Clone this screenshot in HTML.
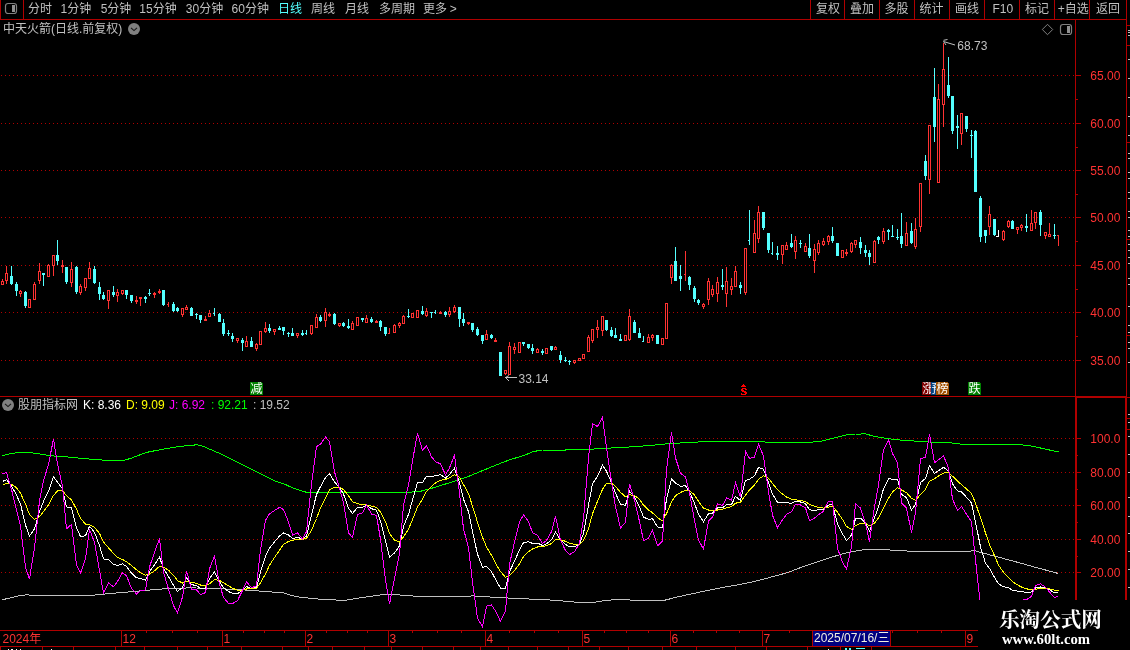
<!DOCTYPE html>
<html><head><meta charset="utf-8"><title>中天火箭 日线</title>
<style>
html,body{margin:0;padding:0;background:#000}
body{width:1130px;height:650px;overflow:hidden;position:relative;font-family:"Liberation Sans","Noto Sans CJK SC",sans-serif}
svg{position:absolute;left:0;top:0;display:block;will-change:transform}
text{font-family:"Liberation Sans","Noto Sans CJK SC",sans-serif}
</style></head><body>
<svg width="1130" height="650" viewBox="0 0 1130 650">
<g shape-rendering="crispEdges">
<rect x="0" y="19" width="1127" height="1" fill="#b00000"/>
<rect x="0" y="0" width="1" height="20" fill="#b00000"/>
<rect x="23" y="0" width="1" height="20" fill="#b00000"/>
<rect x="810" y="0" width="1" height="20" fill="#b00000"/>
<rect x="844" y="0" width="1" height="20" fill="#b00000"/>
<rect x="879" y="0" width="1" height="20" fill="#b00000"/>
<rect x="914" y="0" width="1" height="20" fill="#b00000"/>
<rect x="949" y="0" width="1" height="20" fill="#b00000"/>
<rect x="984" y="0" width="1" height="20" fill="#b00000"/>
<rect x="1019" y="0" width="1" height="20" fill="#b00000"/>
<rect x="1054" y="0" width="1" height="20" fill="#b00000"/>
<rect x="1089" y="0" width="1" height="20" fill="#b00000"/>
<rect x="1126" y="0" width="1" height="650" fill="#b00000"/>
<rect x="1075" y="20" width="1" height="376" fill="#b00000"/>
<rect x="1075" y="396" width="2" height="234" fill="#b00000"/>
<rect x="1125" y="396" width="2" height="234" fill="#b00000"/>
<rect x="0" y="396" width="1076" height="1" fill="#b00000"/>
<rect x="1075" y="396" width="52" height="2" fill="#b00000"/>
<rect x="0" y="630" width="1127" height="1" fill="#b00000"/>
<rect x="0" y="646" width="1127" height="1" fill="#b00000"/>
<path d="M1 75h1v1h-1zM5 75h1v1h-1zM9 75h1v1h-1zM13 75h1v1h-1zM17 75h1v1h-1zM21 75h1v1h-1zM25 75h1v1h-1zM29 75h1v1h-1zM33 75h1v1h-1zM37 75h1v1h-1zM41 75h1v1h-1zM45 75h1v1h-1zM49 75h1v1h-1zM53 75h1v1h-1zM57 75h1v1h-1zM61 75h1v1h-1zM65 75h1v1h-1zM69 75h1v1h-1zM73 75h1v1h-1zM77 75h1v1h-1zM81 75h1v1h-1zM85 75h1v1h-1zM89 75h1v1h-1zM93 75h1v1h-1zM97 75h1v1h-1zM101 75h1v1h-1zM105 75h1v1h-1zM109 75h1v1h-1zM113 75h1v1h-1zM117 75h1v1h-1zM121 75h1v1h-1zM125 75h1v1h-1zM129 75h1v1h-1zM133 75h1v1h-1zM137 75h1v1h-1zM141 75h1v1h-1zM145 75h1v1h-1zM149 75h1v1h-1zM153 75h1v1h-1zM157 75h1v1h-1zM161 75h1v1h-1zM165 75h1v1h-1zM169 75h1v1h-1zM173 75h1v1h-1zM177 75h1v1h-1zM181 75h1v1h-1zM185 75h1v1h-1zM189 75h1v1h-1zM193 75h1v1h-1zM197 75h1v1h-1zM201 75h1v1h-1zM205 75h1v1h-1zM209 75h1v1h-1zM213 75h1v1h-1zM217 75h1v1h-1zM221 75h1v1h-1zM225 75h1v1h-1zM229 75h1v1h-1zM233 75h1v1h-1zM237 75h1v1h-1zM241 75h1v1h-1zM245 75h1v1h-1zM249 75h1v1h-1zM253 75h1v1h-1zM257 75h1v1h-1zM261 75h1v1h-1zM265 75h1v1h-1zM269 75h1v1h-1zM273 75h1v1h-1zM277 75h1v1h-1zM281 75h1v1h-1zM285 75h1v1h-1zM289 75h1v1h-1zM293 75h1v1h-1zM297 75h1v1h-1zM301 75h1v1h-1zM305 75h1v1h-1zM309 75h1v1h-1zM313 75h1v1h-1zM317 75h1v1h-1zM321 75h1v1h-1zM325 75h1v1h-1zM329 75h1v1h-1zM333 75h1v1h-1zM337 75h1v1h-1zM341 75h1v1h-1zM345 75h1v1h-1zM349 75h1v1h-1zM353 75h1v1h-1zM357 75h1v1h-1zM361 75h1v1h-1zM365 75h1v1h-1zM369 75h1v1h-1zM373 75h1v1h-1zM377 75h1v1h-1zM381 75h1v1h-1zM385 75h1v1h-1zM389 75h1v1h-1zM393 75h1v1h-1zM397 75h1v1h-1zM401 75h1v1h-1zM405 75h1v1h-1zM409 75h1v1h-1zM413 75h1v1h-1zM417 75h1v1h-1zM421 75h1v1h-1zM425 75h1v1h-1zM429 75h1v1h-1zM433 75h1v1h-1zM437 75h1v1h-1zM441 75h1v1h-1zM445 75h1v1h-1zM449 75h1v1h-1zM453 75h1v1h-1zM457 75h1v1h-1zM461 75h1v1h-1zM465 75h1v1h-1zM469 75h1v1h-1zM473 75h1v1h-1zM477 75h1v1h-1zM481 75h1v1h-1zM485 75h1v1h-1zM489 75h1v1h-1zM493 75h1v1h-1zM497 75h1v1h-1zM501 75h1v1h-1zM505 75h1v1h-1zM509 75h1v1h-1zM513 75h1v1h-1zM517 75h1v1h-1zM521 75h1v1h-1zM525 75h1v1h-1zM529 75h1v1h-1zM533 75h1v1h-1zM537 75h1v1h-1zM541 75h1v1h-1zM545 75h1v1h-1zM549 75h1v1h-1zM553 75h1v1h-1zM557 75h1v1h-1zM561 75h1v1h-1zM565 75h1v1h-1zM569 75h1v1h-1zM573 75h1v1h-1zM577 75h1v1h-1zM581 75h1v1h-1zM585 75h1v1h-1zM589 75h1v1h-1zM593 75h1v1h-1zM597 75h1v1h-1zM601 75h1v1h-1zM605 75h1v1h-1zM609 75h1v1h-1zM613 75h1v1h-1zM617 75h1v1h-1zM621 75h1v1h-1zM625 75h1v1h-1zM629 75h1v1h-1zM633 75h1v1h-1zM637 75h1v1h-1zM641 75h1v1h-1zM645 75h1v1h-1zM649 75h1v1h-1zM653 75h1v1h-1zM657 75h1v1h-1zM661 75h1v1h-1zM665 75h1v1h-1zM669 75h1v1h-1zM673 75h1v1h-1zM677 75h1v1h-1zM681 75h1v1h-1zM685 75h1v1h-1zM689 75h1v1h-1zM693 75h1v1h-1zM697 75h1v1h-1zM701 75h1v1h-1zM705 75h1v1h-1zM709 75h1v1h-1zM713 75h1v1h-1zM717 75h1v1h-1zM721 75h1v1h-1zM725 75h1v1h-1zM729 75h1v1h-1zM733 75h1v1h-1zM737 75h1v1h-1zM741 75h1v1h-1zM745 75h1v1h-1zM749 75h1v1h-1zM753 75h1v1h-1zM757 75h1v1h-1zM761 75h1v1h-1zM765 75h1v1h-1zM769 75h1v1h-1zM773 75h1v1h-1zM777 75h1v1h-1zM781 75h1v1h-1zM785 75h1v1h-1zM789 75h1v1h-1zM793 75h1v1h-1zM797 75h1v1h-1zM801 75h1v1h-1zM805 75h1v1h-1zM809 75h1v1h-1zM813 75h1v1h-1zM817 75h1v1h-1zM821 75h1v1h-1zM825 75h1v1h-1zM829 75h1v1h-1zM833 75h1v1h-1zM837 75h1v1h-1zM841 75h1v1h-1zM845 75h1v1h-1zM849 75h1v1h-1zM853 75h1v1h-1zM857 75h1v1h-1zM861 75h1v1h-1zM865 75h1v1h-1zM869 75h1v1h-1zM873 75h1v1h-1zM877 75h1v1h-1zM881 75h1v1h-1zM885 75h1v1h-1zM889 75h1v1h-1zM893 75h1v1h-1zM897 75h1v1h-1zM901 75h1v1h-1zM905 75h1v1h-1zM909 75h1v1h-1zM913 75h1v1h-1zM917 75h1v1h-1zM921 75h1v1h-1zM925 75h1v1h-1zM929 75h1v1h-1zM933 75h1v1h-1zM937 75h1v1h-1zM941 75h1v1h-1zM945 75h1v1h-1zM949 75h1v1h-1zM953 75h1v1h-1zM957 75h1v1h-1zM961 75h1v1h-1zM965 75h1v1h-1zM969 75h1v1h-1zM973 75h1v1h-1zM977 75h1v1h-1zM981 75h1v1h-1zM985 75h1v1h-1zM989 75h1v1h-1zM993 75h1v1h-1zM997 75h1v1h-1zM1001 75h1v1h-1zM1005 75h1v1h-1zM1009 75h1v1h-1zM1013 75h1v1h-1zM1017 75h1v1h-1zM1021 75h1v1h-1zM1025 75h1v1h-1zM1029 75h1v1h-1zM1033 75h1v1h-1zM1037 75h1v1h-1zM1041 75h1v1h-1zM1045 75h1v1h-1zM1049 75h1v1h-1zM1053 75h1v1h-1zM1057 75h1v1h-1zM1061 75h1v1h-1zM1065 75h1v1h-1zM1069 75h1v1h-1zM1073 75h1v1h-1z" fill="#b00000"/>
<path d="M1 123h1v1h-1zM5 123h1v1h-1zM9 123h1v1h-1zM13 123h1v1h-1zM17 123h1v1h-1zM21 123h1v1h-1zM25 123h1v1h-1zM29 123h1v1h-1zM33 123h1v1h-1zM37 123h1v1h-1zM41 123h1v1h-1zM45 123h1v1h-1zM49 123h1v1h-1zM53 123h1v1h-1zM57 123h1v1h-1zM61 123h1v1h-1zM65 123h1v1h-1zM69 123h1v1h-1zM73 123h1v1h-1zM77 123h1v1h-1zM81 123h1v1h-1zM85 123h1v1h-1zM89 123h1v1h-1zM93 123h1v1h-1zM97 123h1v1h-1zM101 123h1v1h-1zM105 123h1v1h-1zM109 123h1v1h-1zM113 123h1v1h-1zM117 123h1v1h-1zM121 123h1v1h-1zM125 123h1v1h-1zM129 123h1v1h-1zM133 123h1v1h-1zM137 123h1v1h-1zM141 123h1v1h-1zM145 123h1v1h-1zM149 123h1v1h-1zM153 123h1v1h-1zM157 123h1v1h-1zM161 123h1v1h-1zM165 123h1v1h-1zM169 123h1v1h-1zM173 123h1v1h-1zM177 123h1v1h-1zM181 123h1v1h-1zM185 123h1v1h-1zM189 123h1v1h-1zM193 123h1v1h-1zM197 123h1v1h-1zM201 123h1v1h-1zM205 123h1v1h-1zM209 123h1v1h-1zM213 123h1v1h-1zM217 123h1v1h-1zM221 123h1v1h-1zM225 123h1v1h-1zM229 123h1v1h-1zM233 123h1v1h-1zM237 123h1v1h-1zM241 123h1v1h-1zM245 123h1v1h-1zM249 123h1v1h-1zM253 123h1v1h-1zM257 123h1v1h-1zM261 123h1v1h-1zM265 123h1v1h-1zM269 123h1v1h-1zM273 123h1v1h-1zM277 123h1v1h-1zM281 123h1v1h-1zM285 123h1v1h-1zM289 123h1v1h-1zM293 123h1v1h-1zM297 123h1v1h-1zM301 123h1v1h-1zM305 123h1v1h-1zM309 123h1v1h-1zM313 123h1v1h-1zM317 123h1v1h-1zM321 123h1v1h-1zM325 123h1v1h-1zM329 123h1v1h-1zM333 123h1v1h-1zM337 123h1v1h-1zM341 123h1v1h-1zM345 123h1v1h-1zM349 123h1v1h-1zM353 123h1v1h-1zM357 123h1v1h-1zM361 123h1v1h-1zM365 123h1v1h-1zM369 123h1v1h-1zM373 123h1v1h-1zM377 123h1v1h-1zM381 123h1v1h-1zM385 123h1v1h-1zM389 123h1v1h-1zM393 123h1v1h-1zM397 123h1v1h-1zM401 123h1v1h-1zM405 123h1v1h-1zM409 123h1v1h-1zM413 123h1v1h-1zM417 123h1v1h-1zM421 123h1v1h-1zM425 123h1v1h-1zM429 123h1v1h-1zM433 123h1v1h-1zM437 123h1v1h-1zM441 123h1v1h-1zM445 123h1v1h-1zM449 123h1v1h-1zM453 123h1v1h-1zM457 123h1v1h-1zM461 123h1v1h-1zM465 123h1v1h-1zM469 123h1v1h-1zM473 123h1v1h-1zM477 123h1v1h-1zM481 123h1v1h-1zM485 123h1v1h-1zM489 123h1v1h-1zM493 123h1v1h-1zM497 123h1v1h-1zM501 123h1v1h-1zM505 123h1v1h-1zM509 123h1v1h-1zM513 123h1v1h-1zM517 123h1v1h-1zM521 123h1v1h-1zM525 123h1v1h-1zM529 123h1v1h-1zM533 123h1v1h-1zM537 123h1v1h-1zM541 123h1v1h-1zM545 123h1v1h-1zM549 123h1v1h-1zM553 123h1v1h-1zM557 123h1v1h-1zM561 123h1v1h-1zM565 123h1v1h-1zM569 123h1v1h-1zM573 123h1v1h-1zM577 123h1v1h-1zM581 123h1v1h-1zM585 123h1v1h-1zM589 123h1v1h-1zM593 123h1v1h-1zM597 123h1v1h-1zM601 123h1v1h-1zM605 123h1v1h-1zM609 123h1v1h-1zM613 123h1v1h-1zM617 123h1v1h-1zM621 123h1v1h-1zM625 123h1v1h-1zM629 123h1v1h-1zM633 123h1v1h-1zM637 123h1v1h-1zM641 123h1v1h-1zM645 123h1v1h-1zM649 123h1v1h-1zM653 123h1v1h-1zM657 123h1v1h-1zM661 123h1v1h-1zM665 123h1v1h-1zM669 123h1v1h-1zM673 123h1v1h-1zM677 123h1v1h-1zM681 123h1v1h-1zM685 123h1v1h-1zM689 123h1v1h-1zM693 123h1v1h-1zM697 123h1v1h-1zM701 123h1v1h-1zM705 123h1v1h-1zM709 123h1v1h-1zM713 123h1v1h-1zM717 123h1v1h-1zM721 123h1v1h-1zM725 123h1v1h-1zM729 123h1v1h-1zM733 123h1v1h-1zM737 123h1v1h-1zM741 123h1v1h-1zM745 123h1v1h-1zM749 123h1v1h-1zM753 123h1v1h-1zM757 123h1v1h-1zM761 123h1v1h-1zM765 123h1v1h-1zM769 123h1v1h-1zM773 123h1v1h-1zM777 123h1v1h-1zM781 123h1v1h-1zM785 123h1v1h-1zM789 123h1v1h-1zM793 123h1v1h-1zM797 123h1v1h-1zM801 123h1v1h-1zM805 123h1v1h-1zM809 123h1v1h-1zM813 123h1v1h-1zM817 123h1v1h-1zM821 123h1v1h-1zM825 123h1v1h-1zM829 123h1v1h-1zM833 123h1v1h-1zM837 123h1v1h-1zM841 123h1v1h-1zM845 123h1v1h-1zM849 123h1v1h-1zM853 123h1v1h-1zM857 123h1v1h-1zM861 123h1v1h-1zM865 123h1v1h-1zM869 123h1v1h-1zM873 123h1v1h-1zM877 123h1v1h-1zM881 123h1v1h-1zM885 123h1v1h-1zM889 123h1v1h-1zM893 123h1v1h-1zM897 123h1v1h-1zM901 123h1v1h-1zM905 123h1v1h-1zM909 123h1v1h-1zM913 123h1v1h-1zM917 123h1v1h-1zM921 123h1v1h-1zM925 123h1v1h-1zM929 123h1v1h-1zM933 123h1v1h-1zM937 123h1v1h-1zM941 123h1v1h-1zM945 123h1v1h-1zM949 123h1v1h-1zM953 123h1v1h-1zM957 123h1v1h-1zM961 123h1v1h-1zM965 123h1v1h-1zM969 123h1v1h-1zM973 123h1v1h-1zM977 123h1v1h-1zM981 123h1v1h-1zM985 123h1v1h-1zM989 123h1v1h-1zM993 123h1v1h-1zM997 123h1v1h-1zM1001 123h1v1h-1zM1005 123h1v1h-1zM1009 123h1v1h-1zM1013 123h1v1h-1zM1017 123h1v1h-1zM1021 123h1v1h-1zM1025 123h1v1h-1zM1029 123h1v1h-1zM1033 123h1v1h-1zM1037 123h1v1h-1zM1041 123h1v1h-1zM1045 123h1v1h-1zM1049 123h1v1h-1zM1053 123h1v1h-1zM1057 123h1v1h-1zM1061 123h1v1h-1zM1065 123h1v1h-1zM1069 123h1v1h-1zM1073 123h1v1h-1z" fill="#b00000"/>
<path d="M1 170h1v1h-1zM5 170h1v1h-1zM9 170h1v1h-1zM13 170h1v1h-1zM17 170h1v1h-1zM21 170h1v1h-1zM25 170h1v1h-1zM29 170h1v1h-1zM33 170h1v1h-1zM37 170h1v1h-1zM41 170h1v1h-1zM45 170h1v1h-1zM49 170h1v1h-1zM53 170h1v1h-1zM57 170h1v1h-1zM61 170h1v1h-1zM65 170h1v1h-1zM69 170h1v1h-1zM73 170h1v1h-1zM77 170h1v1h-1zM81 170h1v1h-1zM85 170h1v1h-1zM89 170h1v1h-1zM93 170h1v1h-1zM97 170h1v1h-1zM101 170h1v1h-1zM105 170h1v1h-1zM109 170h1v1h-1zM113 170h1v1h-1zM117 170h1v1h-1zM121 170h1v1h-1zM125 170h1v1h-1zM129 170h1v1h-1zM133 170h1v1h-1zM137 170h1v1h-1zM141 170h1v1h-1zM145 170h1v1h-1zM149 170h1v1h-1zM153 170h1v1h-1zM157 170h1v1h-1zM161 170h1v1h-1zM165 170h1v1h-1zM169 170h1v1h-1zM173 170h1v1h-1zM177 170h1v1h-1zM181 170h1v1h-1zM185 170h1v1h-1zM189 170h1v1h-1zM193 170h1v1h-1zM197 170h1v1h-1zM201 170h1v1h-1zM205 170h1v1h-1zM209 170h1v1h-1zM213 170h1v1h-1zM217 170h1v1h-1zM221 170h1v1h-1zM225 170h1v1h-1zM229 170h1v1h-1zM233 170h1v1h-1zM237 170h1v1h-1zM241 170h1v1h-1zM245 170h1v1h-1zM249 170h1v1h-1zM253 170h1v1h-1zM257 170h1v1h-1zM261 170h1v1h-1zM265 170h1v1h-1zM269 170h1v1h-1zM273 170h1v1h-1zM277 170h1v1h-1zM281 170h1v1h-1zM285 170h1v1h-1zM289 170h1v1h-1zM293 170h1v1h-1zM297 170h1v1h-1zM301 170h1v1h-1zM305 170h1v1h-1zM309 170h1v1h-1zM313 170h1v1h-1zM317 170h1v1h-1zM321 170h1v1h-1zM325 170h1v1h-1zM329 170h1v1h-1zM333 170h1v1h-1zM337 170h1v1h-1zM341 170h1v1h-1zM345 170h1v1h-1zM349 170h1v1h-1zM353 170h1v1h-1zM357 170h1v1h-1zM361 170h1v1h-1zM365 170h1v1h-1zM369 170h1v1h-1zM373 170h1v1h-1zM377 170h1v1h-1zM381 170h1v1h-1zM385 170h1v1h-1zM389 170h1v1h-1zM393 170h1v1h-1zM397 170h1v1h-1zM401 170h1v1h-1zM405 170h1v1h-1zM409 170h1v1h-1zM413 170h1v1h-1zM417 170h1v1h-1zM421 170h1v1h-1zM425 170h1v1h-1zM429 170h1v1h-1zM433 170h1v1h-1zM437 170h1v1h-1zM441 170h1v1h-1zM445 170h1v1h-1zM449 170h1v1h-1zM453 170h1v1h-1zM457 170h1v1h-1zM461 170h1v1h-1zM465 170h1v1h-1zM469 170h1v1h-1zM473 170h1v1h-1zM477 170h1v1h-1zM481 170h1v1h-1zM485 170h1v1h-1zM489 170h1v1h-1zM493 170h1v1h-1zM497 170h1v1h-1zM501 170h1v1h-1zM505 170h1v1h-1zM509 170h1v1h-1zM513 170h1v1h-1zM517 170h1v1h-1zM521 170h1v1h-1zM525 170h1v1h-1zM529 170h1v1h-1zM533 170h1v1h-1zM537 170h1v1h-1zM541 170h1v1h-1zM545 170h1v1h-1zM549 170h1v1h-1zM553 170h1v1h-1zM557 170h1v1h-1zM561 170h1v1h-1zM565 170h1v1h-1zM569 170h1v1h-1zM573 170h1v1h-1zM577 170h1v1h-1zM581 170h1v1h-1zM585 170h1v1h-1zM589 170h1v1h-1zM593 170h1v1h-1zM597 170h1v1h-1zM601 170h1v1h-1zM605 170h1v1h-1zM609 170h1v1h-1zM613 170h1v1h-1zM617 170h1v1h-1zM621 170h1v1h-1zM625 170h1v1h-1zM629 170h1v1h-1zM633 170h1v1h-1zM637 170h1v1h-1zM641 170h1v1h-1zM645 170h1v1h-1zM649 170h1v1h-1zM653 170h1v1h-1zM657 170h1v1h-1zM661 170h1v1h-1zM665 170h1v1h-1zM669 170h1v1h-1zM673 170h1v1h-1zM677 170h1v1h-1zM681 170h1v1h-1zM685 170h1v1h-1zM689 170h1v1h-1zM693 170h1v1h-1zM697 170h1v1h-1zM701 170h1v1h-1zM705 170h1v1h-1zM709 170h1v1h-1zM713 170h1v1h-1zM717 170h1v1h-1zM721 170h1v1h-1zM725 170h1v1h-1zM729 170h1v1h-1zM733 170h1v1h-1zM737 170h1v1h-1zM741 170h1v1h-1zM745 170h1v1h-1zM749 170h1v1h-1zM753 170h1v1h-1zM757 170h1v1h-1zM761 170h1v1h-1zM765 170h1v1h-1zM769 170h1v1h-1zM773 170h1v1h-1zM777 170h1v1h-1zM781 170h1v1h-1zM785 170h1v1h-1zM789 170h1v1h-1zM793 170h1v1h-1zM797 170h1v1h-1zM801 170h1v1h-1zM805 170h1v1h-1zM809 170h1v1h-1zM813 170h1v1h-1zM817 170h1v1h-1zM821 170h1v1h-1zM825 170h1v1h-1zM829 170h1v1h-1zM833 170h1v1h-1zM837 170h1v1h-1zM841 170h1v1h-1zM845 170h1v1h-1zM849 170h1v1h-1zM853 170h1v1h-1zM857 170h1v1h-1zM861 170h1v1h-1zM865 170h1v1h-1zM869 170h1v1h-1zM873 170h1v1h-1zM877 170h1v1h-1zM881 170h1v1h-1zM885 170h1v1h-1zM889 170h1v1h-1zM893 170h1v1h-1zM897 170h1v1h-1zM901 170h1v1h-1zM905 170h1v1h-1zM909 170h1v1h-1zM913 170h1v1h-1zM917 170h1v1h-1zM921 170h1v1h-1zM925 170h1v1h-1zM929 170h1v1h-1zM933 170h1v1h-1zM937 170h1v1h-1zM941 170h1v1h-1zM945 170h1v1h-1zM949 170h1v1h-1zM953 170h1v1h-1zM957 170h1v1h-1zM961 170h1v1h-1zM965 170h1v1h-1zM969 170h1v1h-1zM973 170h1v1h-1zM977 170h1v1h-1zM981 170h1v1h-1zM985 170h1v1h-1zM989 170h1v1h-1zM993 170h1v1h-1zM997 170h1v1h-1zM1001 170h1v1h-1zM1005 170h1v1h-1zM1009 170h1v1h-1zM1013 170h1v1h-1zM1017 170h1v1h-1zM1021 170h1v1h-1zM1025 170h1v1h-1zM1029 170h1v1h-1zM1033 170h1v1h-1zM1037 170h1v1h-1zM1041 170h1v1h-1zM1045 170h1v1h-1zM1049 170h1v1h-1zM1053 170h1v1h-1zM1057 170h1v1h-1zM1061 170h1v1h-1zM1065 170h1v1h-1zM1069 170h1v1h-1zM1073 170h1v1h-1z" fill="#b00000"/>
<path d="M1 217h1v1h-1zM5 217h1v1h-1zM9 217h1v1h-1zM13 217h1v1h-1zM17 217h1v1h-1zM21 217h1v1h-1zM25 217h1v1h-1zM29 217h1v1h-1zM33 217h1v1h-1zM37 217h1v1h-1zM41 217h1v1h-1zM45 217h1v1h-1zM49 217h1v1h-1zM53 217h1v1h-1zM57 217h1v1h-1zM61 217h1v1h-1zM65 217h1v1h-1zM69 217h1v1h-1zM73 217h1v1h-1zM77 217h1v1h-1zM81 217h1v1h-1zM85 217h1v1h-1zM89 217h1v1h-1zM93 217h1v1h-1zM97 217h1v1h-1zM101 217h1v1h-1zM105 217h1v1h-1zM109 217h1v1h-1zM113 217h1v1h-1zM117 217h1v1h-1zM121 217h1v1h-1zM125 217h1v1h-1zM129 217h1v1h-1zM133 217h1v1h-1zM137 217h1v1h-1zM141 217h1v1h-1zM145 217h1v1h-1zM149 217h1v1h-1zM153 217h1v1h-1zM157 217h1v1h-1zM161 217h1v1h-1zM165 217h1v1h-1zM169 217h1v1h-1zM173 217h1v1h-1zM177 217h1v1h-1zM181 217h1v1h-1zM185 217h1v1h-1zM189 217h1v1h-1zM193 217h1v1h-1zM197 217h1v1h-1zM201 217h1v1h-1zM205 217h1v1h-1zM209 217h1v1h-1zM213 217h1v1h-1zM217 217h1v1h-1zM221 217h1v1h-1zM225 217h1v1h-1zM229 217h1v1h-1zM233 217h1v1h-1zM237 217h1v1h-1zM241 217h1v1h-1zM245 217h1v1h-1zM249 217h1v1h-1zM253 217h1v1h-1zM257 217h1v1h-1zM261 217h1v1h-1zM265 217h1v1h-1zM269 217h1v1h-1zM273 217h1v1h-1zM277 217h1v1h-1zM281 217h1v1h-1zM285 217h1v1h-1zM289 217h1v1h-1zM293 217h1v1h-1zM297 217h1v1h-1zM301 217h1v1h-1zM305 217h1v1h-1zM309 217h1v1h-1zM313 217h1v1h-1zM317 217h1v1h-1zM321 217h1v1h-1zM325 217h1v1h-1zM329 217h1v1h-1zM333 217h1v1h-1zM337 217h1v1h-1zM341 217h1v1h-1zM345 217h1v1h-1zM349 217h1v1h-1zM353 217h1v1h-1zM357 217h1v1h-1zM361 217h1v1h-1zM365 217h1v1h-1zM369 217h1v1h-1zM373 217h1v1h-1zM377 217h1v1h-1zM381 217h1v1h-1zM385 217h1v1h-1zM389 217h1v1h-1zM393 217h1v1h-1zM397 217h1v1h-1zM401 217h1v1h-1zM405 217h1v1h-1zM409 217h1v1h-1zM413 217h1v1h-1zM417 217h1v1h-1zM421 217h1v1h-1zM425 217h1v1h-1zM429 217h1v1h-1zM433 217h1v1h-1zM437 217h1v1h-1zM441 217h1v1h-1zM445 217h1v1h-1zM449 217h1v1h-1zM453 217h1v1h-1zM457 217h1v1h-1zM461 217h1v1h-1zM465 217h1v1h-1zM469 217h1v1h-1zM473 217h1v1h-1zM477 217h1v1h-1zM481 217h1v1h-1zM485 217h1v1h-1zM489 217h1v1h-1zM493 217h1v1h-1zM497 217h1v1h-1zM501 217h1v1h-1zM505 217h1v1h-1zM509 217h1v1h-1zM513 217h1v1h-1zM517 217h1v1h-1zM521 217h1v1h-1zM525 217h1v1h-1zM529 217h1v1h-1zM533 217h1v1h-1zM537 217h1v1h-1zM541 217h1v1h-1zM545 217h1v1h-1zM549 217h1v1h-1zM553 217h1v1h-1zM557 217h1v1h-1zM561 217h1v1h-1zM565 217h1v1h-1zM569 217h1v1h-1zM573 217h1v1h-1zM577 217h1v1h-1zM581 217h1v1h-1zM585 217h1v1h-1zM589 217h1v1h-1zM593 217h1v1h-1zM597 217h1v1h-1zM601 217h1v1h-1zM605 217h1v1h-1zM609 217h1v1h-1zM613 217h1v1h-1zM617 217h1v1h-1zM621 217h1v1h-1zM625 217h1v1h-1zM629 217h1v1h-1zM633 217h1v1h-1zM637 217h1v1h-1zM641 217h1v1h-1zM645 217h1v1h-1zM649 217h1v1h-1zM653 217h1v1h-1zM657 217h1v1h-1zM661 217h1v1h-1zM665 217h1v1h-1zM669 217h1v1h-1zM673 217h1v1h-1zM677 217h1v1h-1zM681 217h1v1h-1zM685 217h1v1h-1zM689 217h1v1h-1zM693 217h1v1h-1zM697 217h1v1h-1zM701 217h1v1h-1zM705 217h1v1h-1zM709 217h1v1h-1zM713 217h1v1h-1zM717 217h1v1h-1zM721 217h1v1h-1zM725 217h1v1h-1zM729 217h1v1h-1zM733 217h1v1h-1zM737 217h1v1h-1zM741 217h1v1h-1zM745 217h1v1h-1zM749 217h1v1h-1zM753 217h1v1h-1zM757 217h1v1h-1zM761 217h1v1h-1zM765 217h1v1h-1zM769 217h1v1h-1zM773 217h1v1h-1zM777 217h1v1h-1zM781 217h1v1h-1zM785 217h1v1h-1zM789 217h1v1h-1zM793 217h1v1h-1zM797 217h1v1h-1zM801 217h1v1h-1zM805 217h1v1h-1zM809 217h1v1h-1zM813 217h1v1h-1zM817 217h1v1h-1zM821 217h1v1h-1zM825 217h1v1h-1zM829 217h1v1h-1zM833 217h1v1h-1zM837 217h1v1h-1zM841 217h1v1h-1zM845 217h1v1h-1zM849 217h1v1h-1zM853 217h1v1h-1zM857 217h1v1h-1zM861 217h1v1h-1zM865 217h1v1h-1zM869 217h1v1h-1zM873 217h1v1h-1zM877 217h1v1h-1zM881 217h1v1h-1zM885 217h1v1h-1zM889 217h1v1h-1zM893 217h1v1h-1zM897 217h1v1h-1zM901 217h1v1h-1zM905 217h1v1h-1zM909 217h1v1h-1zM913 217h1v1h-1zM917 217h1v1h-1zM921 217h1v1h-1zM925 217h1v1h-1zM929 217h1v1h-1zM933 217h1v1h-1zM937 217h1v1h-1zM941 217h1v1h-1zM945 217h1v1h-1zM949 217h1v1h-1zM953 217h1v1h-1zM957 217h1v1h-1zM961 217h1v1h-1zM965 217h1v1h-1zM969 217h1v1h-1zM973 217h1v1h-1zM977 217h1v1h-1zM981 217h1v1h-1zM985 217h1v1h-1zM989 217h1v1h-1zM993 217h1v1h-1zM997 217h1v1h-1zM1001 217h1v1h-1zM1005 217h1v1h-1zM1009 217h1v1h-1zM1013 217h1v1h-1zM1017 217h1v1h-1zM1021 217h1v1h-1zM1025 217h1v1h-1zM1029 217h1v1h-1zM1033 217h1v1h-1zM1037 217h1v1h-1zM1041 217h1v1h-1zM1045 217h1v1h-1zM1049 217h1v1h-1zM1053 217h1v1h-1zM1057 217h1v1h-1zM1061 217h1v1h-1zM1065 217h1v1h-1zM1069 217h1v1h-1zM1073 217h1v1h-1z" fill="#b00000"/>
<path d="M1 265h1v1h-1zM5 265h1v1h-1zM9 265h1v1h-1zM13 265h1v1h-1zM17 265h1v1h-1zM21 265h1v1h-1zM25 265h1v1h-1zM29 265h1v1h-1zM33 265h1v1h-1zM37 265h1v1h-1zM41 265h1v1h-1zM45 265h1v1h-1zM49 265h1v1h-1zM53 265h1v1h-1zM57 265h1v1h-1zM61 265h1v1h-1zM65 265h1v1h-1zM69 265h1v1h-1zM73 265h1v1h-1zM77 265h1v1h-1zM81 265h1v1h-1zM85 265h1v1h-1zM89 265h1v1h-1zM93 265h1v1h-1zM97 265h1v1h-1zM101 265h1v1h-1zM105 265h1v1h-1zM109 265h1v1h-1zM113 265h1v1h-1zM117 265h1v1h-1zM121 265h1v1h-1zM125 265h1v1h-1zM129 265h1v1h-1zM133 265h1v1h-1zM137 265h1v1h-1zM141 265h1v1h-1zM145 265h1v1h-1zM149 265h1v1h-1zM153 265h1v1h-1zM157 265h1v1h-1zM161 265h1v1h-1zM165 265h1v1h-1zM169 265h1v1h-1zM173 265h1v1h-1zM177 265h1v1h-1zM181 265h1v1h-1zM185 265h1v1h-1zM189 265h1v1h-1zM193 265h1v1h-1zM197 265h1v1h-1zM201 265h1v1h-1zM205 265h1v1h-1zM209 265h1v1h-1zM213 265h1v1h-1zM217 265h1v1h-1zM221 265h1v1h-1zM225 265h1v1h-1zM229 265h1v1h-1zM233 265h1v1h-1zM237 265h1v1h-1zM241 265h1v1h-1zM245 265h1v1h-1zM249 265h1v1h-1zM253 265h1v1h-1zM257 265h1v1h-1zM261 265h1v1h-1zM265 265h1v1h-1zM269 265h1v1h-1zM273 265h1v1h-1zM277 265h1v1h-1zM281 265h1v1h-1zM285 265h1v1h-1zM289 265h1v1h-1zM293 265h1v1h-1zM297 265h1v1h-1zM301 265h1v1h-1zM305 265h1v1h-1zM309 265h1v1h-1zM313 265h1v1h-1zM317 265h1v1h-1zM321 265h1v1h-1zM325 265h1v1h-1zM329 265h1v1h-1zM333 265h1v1h-1zM337 265h1v1h-1zM341 265h1v1h-1zM345 265h1v1h-1zM349 265h1v1h-1zM353 265h1v1h-1zM357 265h1v1h-1zM361 265h1v1h-1zM365 265h1v1h-1zM369 265h1v1h-1zM373 265h1v1h-1zM377 265h1v1h-1zM381 265h1v1h-1zM385 265h1v1h-1zM389 265h1v1h-1zM393 265h1v1h-1zM397 265h1v1h-1zM401 265h1v1h-1zM405 265h1v1h-1zM409 265h1v1h-1zM413 265h1v1h-1zM417 265h1v1h-1zM421 265h1v1h-1zM425 265h1v1h-1zM429 265h1v1h-1zM433 265h1v1h-1zM437 265h1v1h-1zM441 265h1v1h-1zM445 265h1v1h-1zM449 265h1v1h-1zM453 265h1v1h-1zM457 265h1v1h-1zM461 265h1v1h-1zM465 265h1v1h-1zM469 265h1v1h-1zM473 265h1v1h-1zM477 265h1v1h-1zM481 265h1v1h-1zM485 265h1v1h-1zM489 265h1v1h-1zM493 265h1v1h-1zM497 265h1v1h-1zM501 265h1v1h-1zM505 265h1v1h-1zM509 265h1v1h-1zM513 265h1v1h-1zM517 265h1v1h-1zM521 265h1v1h-1zM525 265h1v1h-1zM529 265h1v1h-1zM533 265h1v1h-1zM537 265h1v1h-1zM541 265h1v1h-1zM545 265h1v1h-1zM549 265h1v1h-1zM553 265h1v1h-1zM557 265h1v1h-1zM561 265h1v1h-1zM565 265h1v1h-1zM569 265h1v1h-1zM573 265h1v1h-1zM577 265h1v1h-1zM581 265h1v1h-1zM585 265h1v1h-1zM589 265h1v1h-1zM593 265h1v1h-1zM597 265h1v1h-1zM601 265h1v1h-1zM605 265h1v1h-1zM609 265h1v1h-1zM613 265h1v1h-1zM617 265h1v1h-1zM621 265h1v1h-1zM625 265h1v1h-1zM629 265h1v1h-1zM633 265h1v1h-1zM637 265h1v1h-1zM641 265h1v1h-1zM645 265h1v1h-1zM649 265h1v1h-1zM653 265h1v1h-1zM657 265h1v1h-1zM661 265h1v1h-1zM665 265h1v1h-1zM669 265h1v1h-1zM673 265h1v1h-1zM677 265h1v1h-1zM681 265h1v1h-1zM685 265h1v1h-1zM689 265h1v1h-1zM693 265h1v1h-1zM697 265h1v1h-1zM701 265h1v1h-1zM705 265h1v1h-1zM709 265h1v1h-1zM713 265h1v1h-1zM717 265h1v1h-1zM721 265h1v1h-1zM725 265h1v1h-1zM729 265h1v1h-1zM733 265h1v1h-1zM737 265h1v1h-1zM741 265h1v1h-1zM745 265h1v1h-1zM749 265h1v1h-1zM753 265h1v1h-1zM757 265h1v1h-1zM761 265h1v1h-1zM765 265h1v1h-1zM769 265h1v1h-1zM773 265h1v1h-1zM777 265h1v1h-1zM781 265h1v1h-1zM785 265h1v1h-1zM789 265h1v1h-1zM793 265h1v1h-1zM797 265h1v1h-1zM801 265h1v1h-1zM805 265h1v1h-1zM809 265h1v1h-1zM813 265h1v1h-1zM817 265h1v1h-1zM821 265h1v1h-1zM825 265h1v1h-1zM829 265h1v1h-1zM833 265h1v1h-1zM837 265h1v1h-1zM841 265h1v1h-1zM845 265h1v1h-1zM849 265h1v1h-1zM853 265h1v1h-1zM857 265h1v1h-1zM861 265h1v1h-1zM865 265h1v1h-1zM869 265h1v1h-1zM873 265h1v1h-1zM877 265h1v1h-1zM881 265h1v1h-1zM885 265h1v1h-1zM889 265h1v1h-1zM893 265h1v1h-1zM897 265h1v1h-1zM901 265h1v1h-1zM905 265h1v1h-1zM909 265h1v1h-1zM913 265h1v1h-1zM917 265h1v1h-1zM921 265h1v1h-1zM925 265h1v1h-1zM929 265h1v1h-1zM933 265h1v1h-1zM937 265h1v1h-1zM941 265h1v1h-1zM945 265h1v1h-1zM949 265h1v1h-1zM953 265h1v1h-1zM957 265h1v1h-1zM961 265h1v1h-1zM965 265h1v1h-1zM969 265h1v1h-1zM973 265h1v1h-1zM977 265h1v1h-1zM981 265h1v1h-1zM985 265h1v1h-1zM989 265h1v1h-1zM993 265h1v1h-1zM997 265h1v1h-1zM1001 265h1v1h-1zM1005 265h1v1h-1zM1009 265h1v1h-1zM1013 265h1v1h-1zM1017 265h1v1h-1zM1021 265h1v1h-1zM1025 265h1v1h-1zM1029 265h1v1h-1zM1033 265h1v1h-1zM1037 265h1v1h-1zM1041 265h1v1h-1zM1045 265h1v1h-1zM1049 265h1v1h-1zM1053 265h1v1h-1zM1057 265h1v1h-1zM1061 265h1v1h-1zM1065 265h1v1h-1zM1069 265h1v1h-1zM1073 265h1v1h-1z" fill="#b00000"/>
<path d="M1 312h1v1h-1zM5 312h1v1h-1zM9 312h1v1h-1zM13 312h1v1h-1zM17 312h1v1h-1zM21 312h1v1h-1zM25 312h1v1h-1zM29 312h1v1h-1zM33 312h1v1h-1zM37 312h1v1h-1zM41 312h1v1h-1zM45 312h1v1h-1zM49 312h1v1h-1zM53 312h1v1h-1zM57 312h1v1h-1zM61 312h1v1h-1zM65 312h1v1h-1zM69 312h1v1h-1zM73 312h1v1h-1zM77 312h1v1h-1zM81 312h1v1h-1zM85 312h1v1h-1zM89 312h1v1h-1zM93 312h1v1h-1zM97 312h1v1h-1zM101 312h1v1h-1zM105 312h1v1h-1zM109 312h1v1h-1zM113 312h1v1h-1zM117 312h1v1h-1zM121 312h1v1h-1zM125 312h1v1h-1zM129 312h1v1h-1zM133 312h1v1h-1zM137 312h1v1h-1zM141 312h1v1h-1zM145 312h1v1h-1zM149 312h1v1h-1zM153 312h1v1h-1zM157 312h1v1h-1zM161 312h1v1h-1zM165 312h1v1h-1zM169 312h1v1h-1zM173 312h1v1h-1zM177 312h1v1h-1zM181 312h1v1h-1zM185 312h1v1h-1zM189 312h1v1h-1zM193 312h1v1h-1zM197 312h1v1h-1zM201 312h1v1h-1zM205 312h1v1h-1zM209 312h1v1h-1zM213 312h1v1h-1zM217 312h1v1h-1zM221 312h1v1h-1zM225 312h1v1h-1zM229 312h1v1h-1zM233 312h1v1h-1zM237 312h1v1h-1zM241 312h1v1h-1zM245 312h1v1h-1zM249 312h1v1h-1zM253 312h1v1h-1zM257 312h1v1h-1zM261 312h1v1h-1zM265 312h1v1h-1zM269 312h1v1h-1zM273 312h1v1h-1zM277 312h1v1h-1zM281 312h1v1h-1zM285 312h1v1h-1zM289 312h1v1h-1zM293 312h1v1h-1zM297 312h1v1h-1zM301 312h1v1h-1zM305 312h1v1h-1zM309 312h1v1h-1zM313 312h1v1h-1zM317 312h1v1h-1zM321 312h1v1h-1zM325 312h1v1h-1zM329 312h1v1h-1zM333 312h1v1h-1zM337 312h1v1h-1zM341 312h1v1h-1zM345 312h1v1h-1zM349 312h1v1h-1zM353 312h1v1h-1zM357 312h1v1h-1zM361 312h1v1h-1zM365 312h1v1h-1zM369 312h1v1h-1zM373 312h1v1h-1zM377 312h1v1h-1zM381 312h1v1h-1zM385 312h1v1h-1zM389 312h1v1h-1zM393 312h1v1h-1zM397 312h1v1h-1zM401 312h1v1h-1zM405 312h1v1h-1zM409 312h1v1h-1zM413 312h1v1h-1zM417 312h1v1h-1zM421 312h1v1h-1zM425 312h1v1h-1zM429 312h1v1h-1zM433 312h1v1h-1zM437 312h1v1h-1zM441 312h1v1h-1zM445 312h1v1h-1zM449 312h1v1h-1zM453 312h1v1h-1zM457 312h1v1h-1zM461 312h1v1h-1zM465 312h1v1h-1zM469 312h1v1h-1zM473 312h1v1h-1zM477 312h1v1h-1zM481 312h1v1h-1zM485 312h1v1h-1zM489 312h1v1h-1zM493 312h1v1h-1zM497 312h1v1h-1zM501 312h1v1h-1zM505 312h1v1h-1zM509 312h1v1h-1zM513 312h1v1h-1zM517 312h1v1h-1zM521 312h1v1h-1zM525 312h1v1h-1zM529 312h1v1h-1zM533 312h1v1h-1zM537 312h1v1h-1zM541 312h1v1h-1zM545 312h1v1h-1zM549 312h1v1h-1zM553 312h1v1h-1zM557 312h1v1h-1zM561 312h1v1h-1zM565 312h1v1h-1zM569 312h1v1h-1zM573 312h1v1h-1zM577 312h1v1h-1zM581 312h1v1h-1zM585 312h1v1h-1zM589 312h1v1h-1zM593 312h1v1h-1zM597 312h1v1h-1zM601 312h1v1h-1zM605 312h1v1h-1zM609 312h1v1h-1zM613 312h1v1h-1zM617 312h1v1h-1zM621 312h1v1h-1zM625 312h1v1h-1zM629 312h1v1h-1zM633 312h1v1h-1zM637 312h1v1h-1zM641 312h1v1h-1zM645 312h1v1h-1zM649 312h1v1h-1zM653 312h1v1h-1zM657 312h1v1h-1zM661 312h1v1h-1zM665 312h1v1h-1zM669 312h1v1h-1zM673 312h1v1h-1zM677 312h1v1h-1zM681 312h1v1h-1zM685 312h1v1h-1zM689 312h1v1h-1zM693 312h1v1h-1zM697 312h1v1h-1zM701 312h1v1h-1zM705 312h1v1h-1zM709 312h1v1h-1zM713 312h1v1h-1zM717 312h1v1h-1zM721 312h1v1h-1zM725 312h1v1h-1zM729 312h1v1h-1zM733 312h1v1h-1zM737 312h1v1h-1zM741 312h1v1h-1zM745 312h1v1h-1zM749 312h1v1h-1zM753 312h1v1h-1zM757 312h1v1h-1zM761 312h1v1h-1zM765 312h1v1h-1zM769 312h1v1h-1zM773 312h1v1h-1zM777 312h1v1h-1zM781 312h1v1h-1zM785 312h1v1h-1zM789 312h1v1h-1zM793 312h1v1h-1zM797 312h1v1h-1zM801 312h1v1h-1zM805 312h1v1h-1zM809 312h1v1h-1zM813 312h1v1h-1zM817 312h1v1h-1zM821 312h1v1h-1zM825 312h1v1h-1zM829 312h1v1h-1zM833 312h1v1h-1zM837 312h1v1h-1zM841 312h1v1h-1zM845 312h1v1h-1zM849 312h1v1h-1zM853 312h1v1h-1zM857 312h1v1h-1zM861 312h1v1h-1zM865 312h1v1h-1zM869 312h1v1h-1zM873 312h1v1h-1zM877 312h1v1h-1zM881 312h1v1h-1zM885 312h1v1h-1zM889 312h1v1h-1zM893 312h1v1h-1zM897 312h1v1h-1zM901 312h1v1h-1zM905 312h1v1h-1zM909 312h1v1h-1zM913 312h1v1h-1zM917 312h1v1h-1zM921 312h1v1h-1zM925 312h1v1h-1zM929 312h1v1h-1zM933 312h1v1h-1zM937 312h1v1h-1zM941 312h1v1h-1zM945 312h1v1h-1zM949 312h1v1h-1zM953 312h1v1h-1zM957 312h1v1h-1zM961 312h1v1h-1zM965 312h1v1h-1zM969 312h1v1h-1zM973 312h1v1h-1zM977 312h1v1h-1zM981 312h1v1h-1zM985 312h1v1h-1zM989 312h1v1h-1zM993 312h1v1h-1zM997 312h1v1h-1zM1001 312h1v1h-1zM1005 312h1v1h-1zM1009 312h1v1h-1zM1013 312h1v1h-1zM1017 312h1v1h-1zM1021 312h1v1h-1zM1025 312h1v1h-1zM1029 312h1v1h-1zM1033 312h1v1h-1zM1037 312h1v1h-1zM1041 312h1v1h-1zM1045 312h1v1h-1zM1049 312h1v1h-1zM1053 312h1v1h-1zM1057 312h1v1h-1zM1061 312h1v1h-1zM1065 312h1v1h-1zM1069 312h1v1h-1zM1073 312h1v1h-1z" fill="#b00000"/>
<path d="M1 360h1v1h-1zM5 360h1v1h-1zM9 360h1v1h-1zM13 360h1v1h-1zM17 360h1v1h-1zM21 360h1v1h-1zM25 360h1v1h-1zM29 360h1v1h-1zM33 360h1v1h-1zM37 360h1v1h-1zM41 360h1v1h-1zM45 360h1v1h-1zM49 360h1v1h-1zM53 360h1v1h-1zM57 360h1v1h-1zM61 360h1v1h-1zM65 360h1v1h-1zM69 360h1v1h-1zM73 360h1v1h-1zM77 360h1v1h-1zM81 360h1v1h-1zM85 360h1v1h-1zM89 360h1v1h-1zM93 360h1v1h-1zM97 360h1v1h-1zM101 360h1v1h-1zM105 360h1v1h-1zM109 360h1v1h-1zM113 360h1v1h-1zM117 360h1v1h-1zM121 360h1v1h-1zM125 360h1v1h-1zM129 360h1v1h-1zM133 360h1v1h-1zM137 360h1v1h-1zM141 360h1v1h-1zM145 360h1v1h-1zM149 360h1v1h-1zM153 360h1v1h-1zM157 360h1v1h-1zM161 360h1v1h-1zM165 360h1v1h-1zM169 360h1v1h-1zM173 360h1v1h-1zM177 360h1v1h-1zM181 360h1v1h-1zM185 360h1v1h-1zM189 360h1v1h-1zM193 360h1v1h-1zM197 360h1v1h-1zM201 360h1v1h-1zM205 360h1v1h-1zM209 360h1v1h-1zM213 360h1v1h-1zM217 360h1v1h-1zM221 360h1v1h-1zM225 360h1v1h-1zM229 360h1v1h-1zM233 360h1v1h-1zM237 360h1v1h-1zM241 360h1v1h-1zM245 360h1v1h-1zM249 360h1v1h-1zM253 360h1v1h-1zM257 360h1v1h-1zM261 360h1v1h-1zM265 360h1v1h-1zM269 360h1v1h-1zM273 360h1v1h-1zM277 360h1v1h-1zM281 360h1v1h-1zM285 360h1v1h-1zM289 360h1v1h-1zM293 360h1v1h-1zM297 360h1v1h-1zM301 360h1v1h-1zM305 360h1v1h-1zM309 360h1v1h-1zM313 360h1v1h-1zM317 360h1v1h-1zM321 360h1v1h-1zM325 360h1v1h-1zM329 360h1v1h-1zM333 360h1v1h-1zM337 360h1v1h-1zM341 360h1v1h-1zM345 360h1v1h-1zM349 360h1v1h-1zM353 360h1v1h-1zM357 360h1v1h-1zM361 360h1v1h-1zM365 360h1v1h-1zM369 360h1v1h-1zM373 360h1v1h-1zM377 360h1v1h-1zM381 360h1v1h-1zM385 360h1v1h-1zM389 360h1v1h-1zM393 360h1v1h-1zM397 360h1v1h-1zM401 360h1v1h-1zM405 360h1v1h-1zM409 360h1v1h-1zM413 360h1v1h-1zM417 360h1v1h-1zM421 360h1v1h-1zM425 360h1v1h-1zM429 360h1v1h-1zM433 360h1v1h-1zM437 360h1v1h-1zM441 360h1v1h-1zM445 360h1v1h-1zM449 360h1v1h-1zM453 360h1v1h-1zM457 360h1v1h-1zM461 360h1v1h-1zM465 360h1v1h-1zM469 360h1v1h-1zM473 360h1v1h-1zM477 360h1v1h-1zM481 360h1v1h-1zM485 360h1v1h-1zM489 360h1v1h-1zM493 360h1v1h-1zM497 360h1v1h-1zM501 360h1v1h-1zM505 360h1v1h-1zM509 360h1v1h-1zM513 360h1v1h-1zM517 360h1v1h-1zM521 360h1v1h-1zM525 360h1v1h-1zM529 360h1v1h-1zM533 360h1v1h-1zM537 360h1v1h-1zM541 360h1v1h-1zM545 360h1v1h-1zM549 360h1v1h-1zM553 360h1v1h-1zM557 360h1v1h-1zM561 360h1v1h-1zM565 360h1v1h-1zM569 360h1v1h-1zM573 360h1v1h-1zM577 360h1v1h-1zM581 360h1v1h-1zM585 360h1v1h-1zM589 360h1v1h-1zM593 360h1v1h-1zM597 360h1v1h-1zM601 360h1v1h-1zM605 360h1v1h-1zM609 360h1v1h-1zM613 360h1v1h-1zM617 360h1v1h-1zM621 360h1v1h-1zM625 360h1v1h-1zM629 360h1v1h-1zM633 360h1v1h-1zM637 360h1v1h-1zM641 360h1v1h-1zM645 360h1v1h-1zM649 360h1v1h-1zM653 360h1v1h-1zM657 360h1v1h-1zM661 360h1v1h-1zM665 360h1v1h-1zM669 360h1v1h-1zM673 360h1v1h-1zM677 360h1v1h-1zM681 360h1v1h-1zM685 360h1v1h-1zM689 360h1v1h-1zM693 360h1v1h-1zM697 360h1v1h-1zM701 360h1v1h-1zM705 360h1v1h-1zM709 360h1v1h-1zM713 360h1v1h-1zM717 360h1v1h-1zM721 360h1v1h-1zM725 360h1v1h-1zM729 360h1v1h-1zM733 360h1v1h-1zM737 360h1v1h-1zM741 360h1v1h-1zM745 360h1v1h-1zM749 360h1v1h-1zM753 360h1v1h-1zM757 360h1v1h-1zM761 360h1v1h-1zM765 360h1v1h-1zM769 360h1v1h-1zM773 360h1v1h-1zM777 360h1v1h-1zM781 360h1v1h-1zM785 360h1v1h-1zM789 360h1v1h-1zM793 360h1v1h-1zM797 360h1v1h-1zM801 360h1v1h-1zM805 360h1v1h-1zM809 360h1v1h-1zM813 360h1v1h-1zM817 360h1v1h-1zM821 360h1v1h-1zM825 360h1v1h-1zM829 360h1v1h-1zM833 360h1v1h-1zM837 360h1v1h-1zM841 360h1v1h-1zM845 360h1v1h-1zM849 360h1v1h-1zM853 360h1v1h-1zM857 360h1v1h-1zM861 360h1v1h-1zM865 360h1v1h-1zM869 360h1v1h-1zM873 360h1v1h-1zM877 360h1v1h-1zM881 360h1v1h-1zM885 360h1v1h-1zM889 360h1v1h-1zM893 360h1v1h-1zM897 360h1v1h-1zM901 360h1v1h-1zM905 360h1v1h-1zM909 360h1v1h-1zM913 360h1v1h-1zM917 360h1v1h-1zM921 360h1v1h-1zM925 360h1v1h-1zM929 360h1v1h-1zM933 360h1v1h-1zM937 360h1v1h-1zM941 360h1v1h-1zM945 360h1v1h-1zM949 360h1v1h-1zM953 360h1v1h-1zM957 360h1v1h-1zM961 360h1v1h-1zM965 360h1v1h-1zM969 360h1v1h-1zM973 360h1v1h-1zM977 360h1v1h-1zM981 360h1v1h-1zM985 360h1v1h-1zM989 360h1v1h-1zM993 360h1v1h-1zM997 360h1v1h-1zM1001 360h1v1h-1zM1005 360h1v1h-1zM1009 360h1v1h-1zM1013 360h1v1h-1zM1017 360h1v1h-1zM1021 360h1v1h-1zM1025 360h1v1h-1zM1029 360h1v1h-1zM1033 360h1v1h-1zM1037 360h1v1h-1zM1041 360h1v1h-1zM1045 360h1v1h-1zM1049 360h1v1h-1zM1053 360h1v1h-1zM1057 360h1v1h-1zM1061 360h1v1h-1zM1065 360h1v1h-1zM1069 360h1v1h-1zM1073 360h1v1h-1z" fill="#b00000"/>
<path d="M1 438h1v1h-1zM5 438h1v1h-1zM9 438h1v1h-1zM13 438h1v1h-1zM17 438h1v1h-1zM21 438h1v1h-1zM25 438h1v1h-1zM29 438h1v1h-1zM33 438h1v1h-1zM37 438h1v1h-1zM41 438h1v1h-1zM45 438h1v1h-1zM49 438h1v1h-1zM53 438h1v1h-1zM57 438h1v1h-1zM61 438h1v1h-1zM65 438h1v1h-1zM69 438h1v1h-1zM73 438h1v1h-1zM77 438h1v1h-1zM81 438h1v1h-1zM85 438h1v1h-1zM89 438h1v1h-1zM93 438h1v1h-1zM97 438h1v1h-1zM101 438h1v1h-1zM105 438h1v1h-1zM109 438h1v1h-1zM113 438h1v1h-1zM117 438h1v1h-1zM121 438h1v1h-1zM125 438h1v1h-1zM129 438h1v1h-1zM133 438h1v1h-1zM137 438h1v1h-1zM141 438h1v1h-1zM145 438h1v1h-1zM149 438h1v1h-1zM153 438h1v1h-1zM157 438h1v1h-1zM161 438h1v1h-1zM165 438h1v1h-1zM169 438h1v1h-1zM173 438h1v1h-1zM177 438h1v1h-1zM181 438h1v1h-1zM185 438h1v1h-1zM189 438h1v1h-1zM193 438h1v1h-1zM197 438h1v1h-1zM201 438h1v1h-1zM205 438h1v1h-1zM209 438h1v1h-1zM213 438h1v1h-1zM217 438h1v1h-1zM221 438h1v1h-1zM225 438h1v1h-1zM229 438h1v1h-1zM233 438h1v1h-1zM237 438h1v1h-1zM241 438h1v1h-1zM245 438h1v1h-1zM249 438h1v1h-1zM253 438h1v1h-1zM257 438h1v1h-1zM261 438h1v1h-1zM265 438h1v1h-1zM269 438h1v1h-1zM273 438h1v1h-1zM277 438h1v1h-1zM281 438h1v1h-1zM285 438h1v1h-1zM289 438h1v1h-1zM293 438h1v1h-1zM297 438h1v1h-1zM301 438h1v1h-1zM305 438h1v1h-1zM309 438h1v1h-1zM313 438h1v1h-1zM317 438h1v1h-1zM321 438h1v1h-1zM325 438h1v1h-1zM329 438h1v1h-1zM333 438h1v1h-1zM337 438h1v1h-1zM341 438h1v1h-1zM345 438h1v1h-1zM349 438h1v1h-1zM353 438h1v1h-1zM357 438h1v1h-1zM361 438h1v1h-1zM365 438h1v1h-1zM369 438h1v1h-1zM373 438h1v1h-1zM377 438h1v1h-1zM381 438h1v1h-1zM385 438h1v1h-1zM389 438h1v1h-1zM393 438h1v1h-1zM397 438h1v1h-1zM401 438h1v1h-1zM405 438h1v1h-1zM409 438h1v1h-1zM413 438h1v1h-1zM417 438h1v1h-1zM421 438h1v1h-1zM425 438h1v1h-1zM429 438h1v1h-1zM433 438h1v1h-1zM437 438h1v1h-1zM441 438h1v1h-1zM445 438h1v1h-1zM449 438h1v1h-1zM453 438h1v1h-1zM457 438h1v1h-1zM461 438h1v1h-1zM465 438h1v1h-1zM469 438h1v1h-1zM473 438h1v1h-1zM477 438h1v1h-1zM481 438h1v1h-1zM485 438h1v1h-1zM489 438h1v1h-1zM493 438h1v1h-1zM497 438h1v1h-1zM501 438h1v1h-1zM505 438h1v1h-1zM509 438h1v1h-1zM513 438h1v1h-1zM517 438h1v1h-1zM521 438h1v1h-1zM525 438h1v1h-1zM529 438h1v1h-1zM533 438h1v1h-1zM537 438h1v1h-1zM541 438h1v1h-1zM545 438h1v1h-1zM549 438h1v1h-1zM553 438h1v1h-1zM557 438h1v1h-1zM561 438h1v1h-1zM565 438h1v1h-1zM569 438h1v1h-1zM573 438h1v1h-1zM577 438h1v1h-1zM581 438h1v1h-1zM585 438h1v1h-1zM589 438h1v1h-1zM593 438h1v1h-1zM597 438h1v1h-1zM601 438h1v1h-1zM605 438h1v1h-1zM609 438h1v1h-1zM613 438h1v1h-1zM617 438h1v1h-1zM621 438h1v1h-1zM625 438h1v1h-1zM629 438h1v1h-1zM633 438h1v1h-1zM637 438h1v1h-1zM641 438h1v1h-1zM645 438h1v1h-1zM649 438h1v1h-1zM653 438h1v1h-1zM657 438h1v1h-1zM661 438h1v1h-1zM665 438h1v1h-1zM669 438h1v1h-1zM673 438h1v1h-1zM677 438h1v1h-1zM681 438h1v1h-1zM685 438h1v1h-1zM689 438h1v1h-1zM693 438h1v1h-1zM697 438h1v1h-1zM701 438h1v1h-1zM705 438h1v1h-1zM709 438h1v1h-1zM713 438h1v1h-1zM717 438h1v1h-1zM721 438h1v1h-1zM725 438h1v1h-1zM729 438h1v1h-1zM733 438h1v1h-1zM737 438h1v1h-1zM741 438h1v1h-1zM745 438h1v1h-1zM749 438h1v1h-1zM753 438h1v1h-1zM757 438h1v1h-1zM761 438h1v1h-1zM765 438h1v1h-1zM769 438h1v1h-1zM773 438h1v1h-1zM777 438h1v1h-1zM781 438h1v1h-1zM785 438h1v1h-1zM789 438h1v1h-1zM793 438h1v1h-1zM797 438h1v1h-1zM801 438h1v1h-1zM805 438h1v1h-1zM809 438h1v1h-1zM813 438h1v1h-1zM817 438h1v1h-1zM821 438h1v1h-1zM825 438h1v1h-1zM829 438h1v1h-1zM833 438h1v1h-1zM837 438h1v1h-1zM841 438h1v1h-1zM845 438h1v1h-1zM849 438h1v1h-1zM853 438h1v1h-1zM857 438h1v1h-1zM861 438h1v1h-1zM865 438h1v1h-1zM869 438h1v1h-1zM873 438h1v1h-1zM877 438h1v1h-1zM881 438h1v1h-1zM885 438h1v1h-1zM889 438h1v1h-1zM893 438h1v1h-1zM897 438h1v1h-1zM901 438h1v1h-1zM905 438h1v1h-1zM909 438h1v1h-1zM913 438h1v1h-1zM917 438h1v1h-1zM921 438h1v1h-1zM925 438h1v1h-1zM929 438h1v1h-1zM933 438h1v1h-1zM937 438h1v1h-1zM941 438h1v1h-1zM945 438h1v1h-1zM949 438h1v1h-1zM953 438h1v1h-1zM957 438h1v1h-1zM961 438h1v1h-1zM965 438h1v1h-1zM969 438h1v1h-1zM973 438h1v1h-1zM977 438h1v1h-1zM981 438h1v1h-1zM985 438h1v1h-1zM989 438h1v1h-1zM993 438h1v1h-1zM997 438h1v1h-1zM1001 438h1v1h-1zM1005 438h1v1h-1zM1009 438h1v1h-1zM1013 438h1v1h-1zM1017 438h1v1h-1zM1021 438h1v1h-1zM1025 438h1v1h-1zM1029 438h1v1h-1zM1033 438h1v1h-1zM1037 438h1v1h-1zM1041 438h1v1h-1zM1045 438h1v1h-1zM1049 438h1v1h-1zM1053 438h1v1h-1zM1057 438h1v1h-1zM1061 438h1v1h-1zM1065 438h1v1h-1zM1069 438h1v1h-1zM1073 438h1v1h-1z" fill="#b00000"/>
<path d="M1 472h1v1h-1zM5 472h1v1h-1zM9 472h1v1h-1zM13 472h1v1h-1zM17 472h1v1h-1zM21 472h1v1h-1zM25 472h1v1h-1zM29 472h1v1h-1zM33 472h1v1h-1zM37 472h1v1h-1zM41 472h1v1h-1zM45 472h1v1h-1zM49 472h1v1h-1zM53 472h1v1h-1zM57 472h1v1h-1zM61 472h1v1h-1zM65 472h1v1h-1zM69 472h1v1h-1zM73 472h1v1h-1zM77 472h1v1h-1zM81 472h1v1h-1zM85 472h1v1h-1zM89 472h1v1h-1zM93 472h1v1h-1zM97 472h1v1h-1zM101 472h1v1h-1zM105 472h1v1h-1zM109 472h1v1h-1zM113 472h1v1h-1zM117 472h1v1h-1zM121 472h1v1h-1zM125 472h1v1h-1zM129 472h1v1h-1zM133 472h1v1h-1zM137 472h1v1h-1zM141 472h1v1h-1zM145 472h1v1h-1zM149 472h1v1h-1zM153 472h1v1h-1zM157 472h1v1h-1zM161 472h1v1h-1zM165 472h1v1h-1zM169 472h1v1h-1zM173 472h1v1h-1zM177 472h1v1h-1zM181 472h1v1h-1zM185 472h1v1h-1zM189 472h1v1h-1zM193 472h1v1h-1zM197 472h1v1h-1zM201 472h1v1h-1zM205 472h1v1h-1zM209 472h1v1h-1zM213 472h1v1h-1zM217 472h1v1h-1zM221 472h1v1h-1zM225 472h1v1h-1zM229 472h1v1h-1zM233 472h1v1h-1zM237 472h1v1h-1zM241 472h1v1h-1zM245 472h1v1h-1zM249 472h1v1h-1zM253 472h1v1h-1zM257 472h1v1h-1zM261 472h1v1h-1zM265 472h1v1h-1zM269 472h1v1h-1zM273 472h1v1h-1zM277 472h1v1h-1zM281 472h1v1h-1zM285 472h1v1h-1zM289 472h1v1h-1zM293 472h1v1h-1zM297 472h1v1h-1zM301 472h1v1h-1zM305 472h1v1h-1zM309 472h1v1h-1zM313 472h1v1h-1zM317 472h1v1h-1zM321 472h1v1h-1zM325 472h1v1h-1zM329 472h1v1h-1zM333 472h1v1h-1zM337 472h1v1h-1zM341 472h1v1h-1zM345 472h1v1h-1zM349 472h1v1h-1zM353 472h1v1h-1zM357 472h1v1h-1zM361 472h1v1h-1zM365 472h1v1h-1zM369 472h1v1h-1zM373 472h1v1h-1zM377 472h1v1h-1zM381 472h1v1h-1zM385 472h1v1h-1zM389 472h1v1h-1zM393 472h1v1h-1zM397 472h1v1h-1zM401 472h1v1h-1zM405 472h1v1h-1zM409 472h1v1h-1zM413 472h1v1h-1zM417 472h1v1h-1zM421 472h1v1h-1zM425 472h1v1h-1zM429 472h1v1h-1zM433 472h1v1h-1zM437 472h1v1h-1zM441 472h1v1h-1zM445 472h1v1h-1zM449 472h1v1h-1zM453 472h1v1h-1zM457 472h1v1h-1zM461 472h1v1h-1zM465 472h1v1h-1zM469 472h1v1h-1zM473 472h1v1h-1zM477 472h1v1h-1zM481 472h1v1h-1zM485 472h1v1h-1zM489 472h1v1h-1zM493 472h1v1h-1zM497 472h1v1h-1zM501 472h1v1h-1zM505 472h1v1h-1zM509 472h1v1h-1zM513 472h1v1h-1zM517 472h1v1h-1zM521 472h1v1h-1zM525 472h1v1h-1zM529 472h1v1h-1zM533 472h1v1h-1zM537 472h1v1h-1zM541 472h1v1h-1zM545 472h1v1h-1zM549 472h1v1h-1zM553 472h1v1h-1zM557 472h1v1h-1zM561 472h1v1h-1zM565 472h1v1h-1zM569 472h1v1h-1zM573 472h1v1h-1zM577 472h1v1h-1zM581 472h1v1h-1zM585 472h1v1h-1zM589 472h1v1h-1zM593 472h1v1h-1zM597 472h1v1h-1zM601 472h1v1h-1zM605 472h1v1h-1zM609 472h1v1h-1zM613 472h1v1h-1zM617 472h1v1h-1zM621 472h1v1h-1zM625 472h1v1h-1zM629 472h1v1h-1zM633 472h1v1h-1zM637 472h1v1h-1zM641 472h1v1h-1zM645 472h1v1h-1zM649 472h1v1h-1zM653 472h1v1h-1zM657 472h1v1h-1zM661 472h1v1h-1zM665 472h1v1h-1zM669 472h1v1h-1zM673 472h1v1h-1zM677 472h1v1h-1zM681 472h1v1h-1zM685 472h1v1h-1zM689 472h1v1h-1zM693 472h1v1h-1zM697 472h1v1h-1zM701 472h1v1h-1zM705 472h1v1h-1zM709 472h1v1h-1zM713 472h1v1h-1zM717 472h1v1h-1zM721 472h1v1h-1zM725 472h1v1h-1zM729 472h1v1h-1zM733 472h1v1h-1zM737 472h1v1h-1zM741 472h1v1h-1zM745 472h1v1h-1zM749 472h1v1h-1zM753 472h1v1h-1zM757 472h1v1h-1zM761 472h1v1h-1zM765 472h1v1h-1zM769 472h1v1h-1zM773 472h1v1h-1zM777 472h1v1h-1zM781 472h1v1h-1zM785 472h1v1h-1zM789 472h1v1h-1zM793 472h1v1h-1zM797 472h1v1h-1zM801 472h1v1h-1zM805 472h1v1h-1zM809 472h1v1h-1zM813 472h1v1h-1zM817 472h1v1h-1zM821 472h1v1h-1zM825 472h1v1h-1zM829 472h1v1h-1zM833 472h1v1h-1zM837 472h1v1h-1zM841 472h1v1h-1zM845 472h1v1h-1zM849 472h1v1h-1zM853 472h1v1h-1zM857 472h1v1h-1zM861 472h1v1h-1zM865 472h1v1h-1zM869 472h1v1h-1zM873 472h1v1h-1zM877 472h1v1h-1zM881 472h1v1h-1zM885 472h1v1h-1zM889 472h1v1h-1zM893 472h1v1h-1zM897 472h1v1h-1zM901 472h1v1h-1zM905 472h1v1h-1zM909 472h1v1h-1zM913 472h1v1h-1zM917 472h1v1h-1zM921 472h1v1h-1zM925 472h1v1h-1zM929 472h1v1h-1zM933 472h1v1h-1zM937 472h1v1h-1zM941 472h1v1h-1zM945 472h1v1h-1zM949 472h1v1h-1zM953 472h1v1h-1zM957 472h1v1h-1zM961 472h1v1h-1zM965 472h1v1h-1zM969 472h1v1h-1zM973 472h1v1h-1zM977 472h1v1h-1zM981 472h1v1h-1zM985 472h1v1h-1zM989 472h1v1h-1zM993 472h1v1h-1zM997 472h1v1h-1zM1001 472h1v1h-1zM1005 472h1v1h-1zM1009 472h1v1h-1zM1013 472h1v1h-1zM1017 472h1v1h-1zM1021 472h1v1h-1zM1025 472h1v1h-1zM1029 472h1v1h-1zM1033 472h1v1h-1zM1037 472h1v1h-1zM1041 472h1v1h-1zM1045 472h1v1h-1zM1049 472h1v1h-1zM1053 472h1v1h-1zM1057 472h1v1h-1zM1061 472h1v1h-1zM1065 472h1v1h-1zM1069 472h1v1h-1zM1073 472h1v1h-1z" fill="#b00000"/>
<path d="M1 505h1v1h-1zM5 505h1v1h-1zM9 505h1v1h-1zM13 505h1v1h-1zM17 505h1v1h-1zM21 505h1v1h-1zM25 505h1v1h-1zM29 505h1v1h-1zM33 505h1v1h-1zM37 505h1v1h-1zM41 505h1v1h-1zM45 505h1v1h-1zM49 505h1v1h-1zM53 505h1v1h-1zM57 505h1v1h-1zM61 505h1v1h-1zM65 505h1v1h-1zM69 505h1v1h-1zM73 505h1v1h-1zM77 505h1v1h-1zM81 505h1v1h-1zM85 505h1v1h-1zM89 505h1v1h-1zM93 505h1v1h-1zM97 505h1v1h-1zM101 505h1v1h-1zM105 505h1v1h-1zM109 505h1v1h-1zM113 505h1v1h-1zM117 505h1v1h-1zM121 505h1v1h-1zM125 505h1v1h-1zM129 505h1v1h-1zM133 505h1v1h-1zM137 505h1v1h-1zM141 505h1v1h-1zM145 505h1v1h-1zM149 505h1v1h-1zM153 505h1v1h-1zM157 505h1v1h-1zM161 505h1v1h-1zM165 505h1v1h-1zM169 505h1v1h-1zM173 505h1v1h-1zM177 505h1v1h-1zM181 505h1v1h-1zM185 505h1v1h-1zM189 505h1v1h-1zM193 505h1v1h-1zM197 505h1v1h-1zM201 505h1v1h-1zM205 505h1v1h-1zM209 505h1v1h-1zM213 505h1v1h-1zM217 505h1v1h-1zM221 505h1v1h-1zM225 505h1v1h-1zM229 505h1v1h-1zM233 505h1v1h-1zM237 505h1v1h-1zM241 505h1v1h-1zM245 505h1v1h-1zM249 505h1v1h-1zM253 505h1v1h-1zM257 505h1v1h-1zM261 505h1v1h-1zM265 505h1v1h-1zM269 505h1v1h-1zM273 505h1v1h-1zM277 505h1v1h-1zM281 505h1v1h-1zM285 505h1v1h-1zM289 505h1v1h-1zM293 505h1v1h-1zM297 505h1v1h-1zM301 505h1v1h-1zM305 505h1v1h-1zM309 505h1v1h-1zM313 505h1v1h-1zM317 505h1v1h-1zM321 505h1v1h-1zM325 505h1v1h-1zM329 505h1v1h-1zM333 505h1v1h-1zM337 505h1v1h-1zM341 505h1v1h-1zM345 505h1v1h-1zM349 505h1v1h-1zM353 505h1v1h-1zM357 505h1v1h-1zM361 505h1v1h-1zM365 505h1v1h-1zM369 505h1v1h-1zM373 505h1v1h-1zM377 505h1v1h-1zM381 505h1v1h-1zM385 505h1v1h-1zM389 505h1v1h-1zM393 505h1v1h-1zM397 505h1v1h-1zM401 505h1v1h-1zM405 505h1v1h-1zM409 505h1v1h-1zM413 505h1v1h-1zM417 505h1v1h-1zM421 505h1v1h-1zM425 505h1v1h-1zM429 505h1v1h-1zM433 505h1v1h-1zM437 505h1v1h-1zM441 505h1v1h-1zM445 505h1v1h-1zM449 505h1v1h-1zM453 505h1v1h-1zM457 505h1v1h-1zM461 505h1v1h-1zM465 505h1v1h-1zM469 505h1v1h-1zM473 505h1v1h-1zM477 505h1v1h-1zM481 505h1v1h-1zM485 505h1v1h-1zM489 505h1v1h-1zM493 505h1v1h-1zM497 505h1v1h-1zM501 505h1v1h-1zM505 505h1v1h-1zM509 505h1v1h-1zM513 505h1v1h-1zM517 505h1v1h-1zM521 505h1v1h-1zM525 505h1v1h-1zM529 505h1v1h-1zM533 505h1v1h-1zM537 505h1v1h-1zM541 505h1v1h-1zM545 505h1v1h-1zM549 505h1v1h-1zM553 505h1v1h-1zM557 505h1v1h-1zM561 505h1v1h-1zM565 505h1v1h-1zM569 505h1v1h-1zM573 505h1v1h-1zM577 505h1v1h-1zM581 505h1v1h-1zM585 505h1v1h-1zM589 505h1v1h-1zM593 505h1v1h-1zM597 505h1v1h-1zM601 505h1v1h-1zM605 505h1v1h-1zM609 505h1v1h-1zM613 505h1v1h-1zM617 505h1v1h-1zM621 505h1v1h-1zM625 505h1v1h-1zM629 505h1v1h-1zM633 505h1v1h-1zM637 505h1v1h-1zM641 505h1v1h-1zM645 505h1v1h-1zM649 505h1v1h-1zM653 505h1v1h-1zM657 505h1v1h-1zM661 505h1v1h-1zM665 505h1v1h-1zM669 505h1v1h-1zM673 505h1v1h-1zM677 505h1v1h-1zM681 505h1v1h-1zM685 505h1v1h-1zM689 505h1v1h-1zM693 505h1v1h-1zM697 505h1v1h-1zM701 505h1v1h-1zM705 505h1v1h-1zM709 505h1v1h-1zM713 505h1v1h-1zM717 505h1v1h-1zM721 505h1v1h-1zM725 505h1v1h-1zM729 505h1v1h-1zM733 505h1v1h-1zM737 505h1v1h-1zM741 505h1v1h-1zM745 505h1v1h-1zM749 505h1v1h-1zM753 505h1v1h-1zM757 505h1v1h-1zM761 505h1v1h-1zM765 505h1v1h-1zM769 505h1v1h-1zM773 505h1v1h-1zM777 505h1v1h-1zM781 505h1v1h-1zM785 505h1v1h-1zM789 505h1v1h-1zM793 505h1v1h-1zM797 505h1v1h-1zM801 505h1v1h-1zM805 505h1v1h-1zM809 505h1v1h-1zM813 505h1v1h-1zM817 505h1v1h-1zM821 505h1v1h-1zM825 505h1v1h-1zM829 505h1v1h-1zM833 505h1v1h-1zM837 505h1v1h-1zM841 505h1v1h-1zM845 505h1v1h-1zM849 505h1v1h-1zM853 505h1v1h-1zM857 505h1v1h-1zM861 505h1v1h-1zM865 505h1v1h-1zM869 505h1v1h-1zM873 505h1v1h-1zM877 505h1v1h-1zM881 505h1v1h-1zM885 505h1v1h-1zM889 505h1v1h-1zM893 505h1v1h-1zM897 505h1v1h-1zM901 505h1v1h-1zM905 505h1v1h-1zM909 505h1v1h-1zM913 505h1v1h-1zM917 505h1v1h-1zM921 505h1v1h-1zM925 505h1v1h-1zM929 505h1v1h-1zM933 505h1v1h-1zM937 505h1v1h-1zM941 505h1v1h-1zM945 505h1v1h-1zM949 505h1v1h-1zM953 505h1v1h-1zM957 505h1v1h-1zM961 505h1v1h-1zM965 505h1v1h-1zM969 505h1v1h-1zM973 505h1v1h-1zM977 505h1v1h-1zM981 505h1v1h-1zM985 505h1v1h-1zM989 505h1v1h-1zM993 505h1v1h-1zM997 505h1v1h-1zM1001 505h1v1h-1zM1005 505h1v1h-1zM1009 505h1v1h-1zM1013 505h1v1h-1zM1017 505h1v1h-1zM1021 505h1v1h-1zM1025 505h1v1h-1zM1029 505h1v1h-1zM1033 505h1v1h-1zM1037 505h1v1h-1zM1041 505h1v1h-1zM1045 505h1v1h-1zM1049 505h1v1h-1zM1053 505h1v1h-1zM1057 505h1v1h-1zM1061 505h1v1h-1zM1065 505h1v1h-1zM1069 505h1v1h-1zM1073 505h1v1h-1z" fill="#b00000"/>
<path d="M1 539h1v1h-1zM5 539h1v1h-1zM9 539h1v1h-1zM13 539h1v1h-1zM17 539h1v1h-1zM21 539h1v1h-1zM25 539h1v1h-1zM29 539h1v1h-1zM33 539h1v1h-1zM37 539h1v1h-1zM41 539h1v1h-1zM45 539h1v1h-1zM49 539h1v1h-1zM53 539h1v1h-1zM57 539h1v1h-1zM61 539h1v1h-1zM65 539h1v1h-1zM69 539h1v1h-1zM73 539h1v1h-1zM77 539h1v1h-1zM81 539h1v1h-1zM85 539h1v1h-1zM89 539h1v1h-1zM93 539h1v1h-1zM97 539h1v1h-1zM101 539h1v1h-1zM105 539h1v1h-1zM109 539h1v1h-1zM113 539h1v1h-1zM117 539h1v1h-1zM121 539h1v1h-1zM125 539h1v1h-1zM129 539h1v1h-1zM133 539h1v1h-1zM137 539h1v1h-1zM141 539h1v1h-1zM145 539h1v1h-1zM149 539h1v1h-1zM153 539h1v1h-1zM157 539h1v1h-1zM161 539h1v1h-1zM165 539h1v1h-1zM169 539h1v1h-1zM173 539h1v1h-1zM177 539h1v1h-1zM181 539h1v1h-1zM185 539h1v1h-1zM189 539h1v1h-1zM193 539h1v1h-1zM197 539h1v1h-1zM201 539h1v1h-1zM205 539h1v1h-1zM209 539h1v1h-1zM213 539h1v1h-1zM217 539h1v1h-1zM221 539h1v1h-1zM225 539h1v1h-1zM229 539h1v1h-1zM233 539h1v1h-1zM237 539h1v1h-1zM241 539h1v1h-1zM245 539h1v1h-1zM249 539h1v1h-1zM253 539h1v1h-1zM257 539h1v1h-1zM261 539h1v1h-1zM265 539h1v1h-1zM269 539h1v1h-1zM273 539h1v1h-1zM277 539h1v1h-1zM281 539h1v1h-1zM285 539h1v1h-1zM289 539h1v1h-1zM293 539h1v1h-1zM297 539h1v1h-1zM301 539h1v1h-1zM305 539h1v1h-1zM309 539h1v1h-1zM313 539h1v1h-1zM317 539h1v1h-1zM321 539h1v1h-1zM325 539h1v1h-1zM329 539h1v1h-1zM333 539h1v1h-1zM337 539h1v1h-1zM341 539h1v1h-1zM345 539h1v1h-1zM349 539h1v1h-1zM353 539h1v1h-1zM357 539h1v1h-1zM361 539h1v1h-1zM365 539h1v1h-1zM369 539h1v1h-1zM373 539h1v1h-1zM377 539h1v1h-1zM381 539h1v1h-1zM385 539h1v1h-1zM389 539h1v1h-1zM393 539h1v1h-1zM397 539h1v1h-1zM401 539h1v1h-1zM405 539h1v1h-1zM409 539h1v1h-1zM413 539h1v1h-1zM417 539h1v1h-1zM421 539h1v1h-1zM425 539h1v1h-1zM429 539h1v1h-1zM433 539h1v1h-1zM437 539h1v1h-1zM441 539h1v1h-1zM445 539h1v1h-1zM449 539h1v1h-1zM453 539h1v1h-1zM457 539h1v1h-1zM461 539h1v1h-1zM465 539h1v1h-1zM469 539h1v1h-1zM473 539h1v1h-1zM477 539h1v1h-1zM481 539h1v1h-1zM485 539h1v1h-1zM489 539h1v1h-1zM493 539h1v1h-1zM497 539h1v1h-1zM501 539h1v1h-1zM505 539h1v1h-1zM509 539h1v1h-1zM513 539h1v1h-1zM517 539h1v1h-1zM521 539h1v1h-1zM525 539h1v1h-1zM529 539h1v1h-1zM533 539h1v1h-1zM537 539h1v1h-1zM541 539h1v1h-1zM545 539h1v1h-1zM549 539h1v1h-1zM553 539h1v1h-1zM557 539h1v1h-1zM561 539h1v1h-1zM565 539h1v1h-1zM569 539h1v1h-1zM573 539h1v1h-1zM577 539h1v1h-1zM581 539h1v1h-1zM585 539h1v1h-1zM589 539h1v1h-1zM593 539h1v1h-1zM597 539h1v1h-1zM601 539h1v1h-1zM605 539h1v1h-1zM609 539h1v1h-1zM613 539h1v1h-1zM617 539h1v1h-1zM621 539h1v1h-1zM625 539h1v1h-1zM629 539h1v1h-1zM633 539h1v1h-1zM637 539h1v1h-1zM641 539h1v1h-1zM645 539h1v1h-1zM649 539h1v1h-1zM653 539h1v1h-1zM657 539h1v1h-1zM661 539h1v1h-1zM665 539h1v1h-1zM669 539h1v1h-1zM673 539h1v1h-1zM677 539h1v1h-1zM681 539h1v1h-1zM685 539h1v1h-1zM689 539h1v1h-1zM693 539h1v1h-1zM697 539h1v1h-1zM701 539h1v1h-1zM705 539h1v1h-1zM709 539h1v1h-1zM713 539h1v1h-1zM717 539h1v1h-1zM721 539h1v1h-1zM725 539h1v1h-1zM729 539h1v1h-1zM733 539h1v1h-1zM737 539h1v1h-1zM741 539h1v1h-1zM745 539h1v1h-1zM749 539h1v1h-1zM753 539h1v1h-1zM757 539h1v1h-1zM761 539h1v1h-1zM765 539h1v1h-1zM769 539h1v1h-1zM773 539h1v1h-1zM777 539h1v1h-1zM781 539h1v1h-1zM785 539h1v1h-1zM789 539h1v1h-1zM793 539h1v1h-1zM797 539h1v1h-1zM801 539h1v1h-1zM805 539h1v1h-1zM809 539h1v1h-1zM813 539h1v1h-1zM817 539h1v1h-1zM821 539h1v1h-1zM825 539h1v1h-1zM829 539h1v1h-1zM833 539h1v1h-1zM837 539h1v1h-1zM841 539h1v1h-1zM845 539h1v1h-1zM849 539h1v1h-1zM853 539h1v1h-1zM857 539h1v1h-1zM861 539h1v1h-1zM865 539h1v1h-1zM869 539h1v1h-1zM873 539h1v1h-1zM877 539h1v1h-1zM881 539h1v1h-1zM885 539h1v1h-1zM889 539h1v1h-1zM893 539h1v1h-1zM897 539h1v1h-1zM901 539h1v1h-1zM905 539h1v1h-1zM909 539h1v1h-1zM913 539h1v1h-1zM917 539h1v1h-1zM921 539h1v1h-1zM925 539h1v1h-1zM929 539h1v1h-1zM933 539h1v1h-1zM937 539h1v1h-1zM941 539h1v1h-1zM945 539h1v1h-1zM949 539h1v1h-1zM953 539h1v1h-1zM957 539h1v1h-1zM961 539h1v1h-1zM965 539h1v1h-1zM969 539h1v1h-1zM973 539h1v1h-1zM977 539h1v1h-1zM981 539h1v1h-1zM985 539h1v1h-1zM989 539h1v1h-1zM993 539h1v1h-1zM997 539h1v1h-1zM1001 539h1v1h-1zM1005 539h1v1h-1zM1009 539h1v1h-1zM1013 539h1v1h-1zM1017 539h1v1h-1zM1021 539h1v1h-1zM1025 539h1v1h-1zM1029 539h1v1h-1zM1033 539h1v1h-1zM1037 539h1v1h-1zM1041 539h1v1h-1zM1045 539h1v1h-1zM1049 539h1v1h-1zM1053 539h1v1h-1zM1057 539h1v1h-1zM1061 539h1v1h-1zM1065 539h1v1h-1zM1069 539h1v1h-1zM1073 539h1v1h-1z" fill="#b00000"/>
<path d="M1 572h1v1h-1zM5 572h1v1h-1zM9 572h1v1h-1zM13 572h1v1h-1zM17 572h1v1h-1zM21 572h1v1h-1zM25 572h1v1h-1zM29 572h1v1h-1zM33 572h1v1h-1zM37 572h1v1h-1zM41 572h1v1h-1zM45 572h1v1h-1zM49 572h1v1h-1zM53 572h1v1h-1zM57 572h1v1h-1zM61 572h1v1h-1zM65 572h1v1h-1zM69 572h1v1h-1zM73 572h1v1h-1zM77 572h1v1h-1zM81 572h1v1h-1zM85 572h1v1h-1zM89 572h1v1h-1zM93 572h1v1h-1zM97 572h1v1h-1zM101 572h1v1h-1zM105 572h1v1h-1zM109 572h1v1h-1zM113 572h1v1h-1zM117 572h1v1h-1zM121 572h1v1h-1zM125 572h1v1h-1zM129 572h1v1h-1zM133 572h1v1h-1zM137 572h1v1h-1zM141 572h1v1h-1zM145 572h1v1h-1zM149 572h1v1h-1zM153 572h1v1h-1zM157 572h1v1h-1zM161 572h1v1h-1zM165 572h1v1h-1zM169 572h1v1h-1zM173 572h1v1h-1zM177 572h1v1h-1zM181 572h1v1h-1zM185 572h1v1h-1zM189 572h1v1h-1zM193 572h1v1h-1zM197 572h1v1h-1zM201 572h1v1h-1zM205 572h1v1h-1zM209 572h1v1h-1zM213 572h1v1h-1zM217 572h1v1h-1zM221 572h1v1h-1zM225 572h1v1h-1zM229 572h1v1h-1zM233 572h1v1h-1zM237 572h1v1h-1zM241 572h1v1h-1zM245 572h1v1h-1zM249 572h1v1h-1zM253 572h1v1h-1zM257 572h1v1h-1zM261 572h1v1h-1zM265 572h1v1h-1zM269 572h1v1h-1zM273 572h1v1h-1zM277 572h1v1h-1zM281 572h1v1h-1zM285 572h1v1h-1zM289 572h1v1h-1zM293 572h1v1h-1zM297 572h1v1h-1zM301 572h1v1h-1zM305 572h1v1h-1zM309 572h1v1h-1zM313 572h1v1h-1zM317 572h1v1h-1zM321 572h1v1h-1zM325 572h1v1h-1zM329 572h1v1h-1zM333 572h1v1h-1zM337 572h1v1h-1zM341 572h1v1h-1zM345 572h1v1h-1zM349 572h1v1h-1zM353 572h1v1h-1zM357 572h1v1h-1zM361 572h1v1h-1zM365 572h1v1h-1zM369 572h1v1h-1zM373 572h1v1h-1zM377 572h1v1h-1zM381 572h1v1h-1zM385 572h1v1h-1zM389 572h1v1h-1zM393 572h1v1h-1zM397 572h1v1h-1zM401 572h1v1h-1zM405 572h1v1h-1zM409 572h1v1h-1zM413 572h1v1h-1zM417 572h1v1h-1zM421 572h1v1h-1zM425 572h1v1h-1zM429 572h1v1h-1zM433 572h1v1h-1zM437 572h1v1h-1zM441 572h1v1h-1zM445 572h1v1h-1zM449 572h1v1h-1zM453 572h1v1h-1zM457 572h1v1h-1zM461 572h1v1h-1zM465 572h1v1h-1zM469 572h1v1h-1zM473 572h1v1h-1zM477 572h1v1h-1zM481 572h1v1h-1zM485 572h1v1h-1zM489 572h1v1h-1zM493 572h1v1h-1zM497 572h1v1h-1zM501 572h1v1h-1zM505 572h1v1h-1zM509 572h1v1h-1zM513 572h1v1h-1zM517 572h1v1h-1zM521 572h1v1h-1zM525 572h1v1h-1zM529 572h1v1h-1zM533 572h1v1h-1zM537 572h1v1h-1zM541 572h1v1h-1zM545 572h1v1h-1zM549 572h1v1h-1zM553 572h1v1h-1zM557 572h1v1h-1zM561 572h1v1h-1zM565 572h1v1h-1zM569 572h1v1h-1zM573 572h1v1h-1zM577 572h1v1h-1zM581 572h1v1h-1zM585 572h1v1h-1zM589 572h1v1h-1zM593 572h1v1h-1zM597 572h1v1h-1zM601 572h1v1h-1zM605 572h1v1h-1zM609 572h1v1h-1zM613 572h1v1h-1zM617 572h1v1h-1zM621 572h1v1h-1zM625 572h1v1h-1zM629 572h1v1h-1zM633 572h1v1h-1zM637 572h1v1h-1zM641 572h1v1h-1zM645 572h1v1h-1zM649 572h1v1h-1zM653 572h1v1h-1zM657 572h1v1h-1zM661 572h1v1h-1zM665 572h1v1h-1zM669 572h1v1h-1zM673 572h1v1h-1zM677 572h1v1h-1zM681 572h1v1h-1zM685 572h1v1h-1zM689 572h1v1h-1zM693 572h1v1h-1zM697 572h1v1h-1zM701 572h1v1h-1zM705 572h1v1h-1zM709 572h1v1h-1zM713 572h1v1h-1zM717 572h1v1h-1zM721 572h1v1h-1zM725 572h1v1h-1zM729 572h1v1h-1zM733 572h1v1h-1zM737 572h1v1h-1zM741 572h1v1h-1zM745 572h1v1h-1zM749 572h1v1h-1zM753 572h1v1h-1zM757 572h1v1h-1zM761 572h1v1h-1zM765 572h1v1h-1zM769 572h1v1h-1zM773 572h1v1h-1zM777 572h1v1h-1zM781 572h1v1h-1zM785 572h1v1h-1zM789 572h1v1h-1zM793 572h1v1h-1zM797 572h1v1h-1zM801 572h1v1h-1zM805 572h1v1h-1zM809 572h1v1h-1zM813 572h1v1h-1zM817 572h1v1h-1zM821 572h1v1h-1zM825 572h1v1h-1zM829 572h1v1h-1zM833 572h1v1h-1zM837 572h1v1h-1zM841 572h1v1h-1zM845 572h1v1h-1zM849 572h1v1h-1zM853 572h1v1h-1zM857 572h1v1h-1zM861 572h1v1h-1zM865 572h1v1h-1zM869 572h1v1h-1zM873 572h1v1h-1zM877 572h1v1h-1zM881 572h1v1h-1zM885 572h1v1h-1zM889 572h1v1h-1zM893 572h1v1h-1zM897 572h1v1h-1zM901 572h1v1h-1zM905 572h1v1h-1zM909 572h1v1h-1zM913 572h1v1h-1zM917 572h1v1h-1zM921 572h1v1h-1zM925 572h1v1h-1zM929 572h1v1h-1zM933 572h1v1h-1zM937 572h1v1h-1zM941 572h1v1h-1zM945 572h1v1h-1zM949 572h1v1h-1zM953 572h1v1h-1zM957 572h1v1h-1zM961 572h1v1h-1zM965 572h1v1h-1zM969 572h1v1h-1zM973 572h1v1h-1zM977 572h1v1h-1zM981 572h1v1h-1zM985 572h1v1h-1zM989 572h1v1h-1zM993 572h1v1h-1zM997 572h1v1h-1zM1001 572h1v1h-1zM1005 572h1v1h-1zM1009 572h1v1h-1zM1013 572h1v1h-1zM1017 572h1v1h-1zM1021 572h1v1h-1zM1025 572h1v1h-1zM1029 572h1v1h-1zM1033 572h1v1h-1zM1037 572h1v1h-1zM1041 572h1v1h-1zM1045 572h1v1h-1zM1049 572h1v1h-1zM1053 572h1v1h-1zM1057 572h1v1h-1zM1061 572h1v1h-1zM1065 572h1v1h-1zM1069 572h1v1h-1zM1073 572h1v1h-1z" fill="#b00000"/>
<rect x="1076" y="75" width="5" height="1" fill="#b00000"/>
<rect x="1076" y="123" width="5" height="1" fill="#b00000"/>
<rect x="1076" y="170" width="5" height="1" fill="#b00000"/>
<rect x="1076" y="217" width="5" height="1" fill="#b00000"/>
<rect x="1076" y="265" width="5" height="1" fill="#b00000"/>
<rect x="1076" y="312" width="5" height="1" fill="#b00000"/>
<rect x="1076" y="360" width="5" height="1" fill="#b00000"/>
<rect x="1076" y="99" width="2" height="1" fill="#b00000"/>
<rect x="1076" y="147" width="2" height="1" fill="#b00000"/>
<rect x="1076" y="194" width="2" height="1" fill="#b00000"/>
<rect x="1076" y="241" width="2" height="1" fill="#b00000"/>
<rect x="1076" y="289" width="2" height="1" fill="#b00000"/>
<rect x="1076" y="336" width="2" height="1" fill="#b00000"/>
<rect x="1076" y="438" width="5" height="1" fill="#b00000"/>
<rect x="1076" y="472" width="5" height="1" fill="#b00000"/>
<rect x="1076" y="505" width="5" height="1" fill="#b00000"/>
<rect x="1076" y="539" width="5" height="1" fill="#b00000"/>
<rect x="1076" y="572" width="5" height="1" fill="#b00000"/>
<rect x="1076" y="455" width="2" height="1" fill="#b00000"/>
<rect x="1076" y="489" width="2" height="1" fill="#b00000"/>
<rect x="1076" y="522" width="2" height="1" fill="#b00000"/>
<rect x="1076" y="556" width="2" height="1" fill="#b00000"/>
<rect x="2" y="279" width="1" height="6" fill="#ff3232"/>
<rect x="1" y="281" width="3" height="4" fill="#ff3232"/>
<rect x="2" y="282" width="1" height="2" fill="#000"/>
<rect x="6" y="266" width="1" height="18" fill="#ff3232"/>
<rect x="5" y="273" width="3" height="8" fill="#ff3232"/>
<rect x="6" y="274" width="1" height="6" fill="#000"/>
<rect x="11" y="266" width="1" height="19" fill="#54ffff"/>
<rect x="10" y="276" width="3" height="8" fill="#54ffff"/>
<rect x="16" y="282" width="1" height="14" fill="#54ffff"/>
<rect x="15" y="284" width="3" height="7" fill="#54ffff"/>
<rect x="20" y="290" width="1" height="7" fill="#ff3232"/>
<rect x="19" y="291" width="3" height="3" fill="#ff3232"/>
<rect x="20" y="292" width="1" height="1" fill="#000"/>
<rect x="25" y="291" width="1" height="17" fill="#54ffff"/>
<rect x="24" y="292" width="3" height="14" fill="#54ffff"/>
<rect x="29" y="299" width="1" height="9" fill="#ff3232"/>
<rect x="28" y="299" width="3" height="9" fill="#ff3232"/>
<rect x="29" y="300" width="1" height="7" fill="#000"/>
<rect x="34" y="282" width="1" height="18" fill="#ff3232"/>
<rect x="33" y="284" width="3" height="16" fill="#ff3232"/>
<rect x="34" y="285" width="1" height="14" fill="#000"/>
<rect x="39" y="263" width="1" height="21" fill="#ff3232"/>
<rect x="38" y="271" width="3" height="10" fill="#ff3232"/>
<rect x="39" y="272" width="1" height="8" fill="#000"/>
<rect x="43" y="273" width="1" height="13" fill="#54ffff"/>
<rect x="42" y="273" width="3" height="2" fill="#54ffff"/>
<rect x="48" y="264" width="1" height="13" fill="#ff3232"/>
<rect x="47" y="265" width="3" height="12" fill="#ff3232"/>
<rect x="48" y="266" width="1" height="10" fill="#000"/>
<rect x="53" y="255" width="1" height="21" fill="#ff3232"/>
<rect x="52" y="255" width="3" height="11" fill="#ff3232"/>
<rect x="53" y="256" width="1" height="9" fill="#000"/>
<rect x="57" y="240" width="1" height="25" fill="#54ffff"/>
<rect x="56" y="255" width="3" height="6" fill="#54ffff"/>
<rect x="62" y="260" width="1" height="13" fill="#ff3232"/>
<rect x="61" y="265" width="3" height="2" fill="#ff3232"/>
<rect x="66" y="267" width="1" height="17" fill="#54ffff"/>
<rect x="65" y="267" width="3" height="15" fill="#54ffff"/>
<rect x="71" y="262" width="1" height="25" fill="#ff3232"/>
<rect x="70" y="269" width="3" height="14" fill="#ff3232"/>
<rect x="71" y="270" width="1" height="12" fill="#000"/>
<rect x="76" y="266" width="1" height="28" fill="#54ffff"/>
<rect x="75" y="267" width="3" height="25" fill="#54ffff"/>
<rect x="80" y="284" width="1" height="11" fill="#ff3232"/>
<rect x="79" y="286" width="3" height="7" fill="#ff3232"/>
<rect x="80" y="287" width="1" height="5" fill="#000"/>
<rect x="85" y="278" width="1" height="13" fill="#ff3232"/>
<rect x="84" y="278" width="3" height="10" fill="#ff3232"/>
<rect x="85" y="279" width="1" height="8" fill="#000"/>
<rect x="89" y="262" width="1" height="17" fill="#ff3232"/>
<rect x="88" y="268" width="3" height="11" fill="#ff3232"/>
<rect x="89" y="269" width="1" height="9" fill="#000"/>
<rect x="94" y="266" width="1" height="18" fill="#54ffff"/>
<rect x="93" y="269" width="3" height="14" fill="#54ffff"/>
<rect x="99" y="282" width="1" height="18" fill="#54ffff"/>
<rect x="98" y="287" width="3" height="7" fill="#54ffff"/>
<rect x="103" y="292" width="1" height="8" fill="#54ffff"/>
<rect x="102" y="295" width="3" height="4" fill="#54ffff"/>
<rect x="108" y="290" width="1" height="19" fill="#ff3232"/>
<rect x="107" y="290" width="3" height="11" fill="#ff3232"/>
<rect x="108" y="291" width="1" height="9" fill="#000"/>
<rect x="113" y="286" width="1" height="11" fill="#54ffff"/>
<rect x="112" y="292" width="3" height="3" fill="#54ffff"/>
<rect x="117" y="289" width="1" height="13" fill="#ff3232"/>
<rect x="116" y="292" width="3" height="4" fill="#ff3232"/>
<rect x="117" y="293" width="1" height="2" fill="#000"/>
<rect x="122" y="290" width="1" height="5" fill="#ff3232"/>
<rect x="121" y="290" width="3" height="4" fill="#ff3232"/>
<rect x="122" y="291" width="1" height="2" fill="#000"/>
<rect x="126" y="290" width="1" height="9" fill="#54ffff"/>
<rect x="125" y="290" width="3" height="5" fill="#54ffff"/>
<rect x="131" y="295" width="1" height="8" fill="#54ffff"/>
<rect x="130" y="295" width="3" height="6" fill="#54ffff"/>
<rect x="136" y="296" width="1" height="8" fill="#ff3232"/>
<rect x="135" y="300" width="3" height="2" fill="#ff3232"/>
<rect x="140" y="297" width="1" height="9" fill="#ff3232"/>
<rect x="139" y="297" width="3" height="2" fill="#ff3232"/>
<rect x="145" y="296" width="1" height="7" fill="#54ffff"/>
<rect x="144" y="297" width="3" height="2" fill="#54ffff"/>
<rect x="149" y="289" width="1" height="7" fill="#54ffff"/>
<rect x="148" y="293" width="3" height="1" fill="#54ffff"/>
<rect x="154" y="292" width="1" height="6" fill="#ff3232"/>
<rect x="153" y="293" width="3" height="2" fill="#ff3232"/>
<rect x="159" y="289" width="1" height="5" fill="#ff3232"/>
<rect x="158" y="291" width="3" height="2" fill="#ff3232"/>
<rect x="163" y="290" width="1" height="16" fill="#54ffff"/>
<rect x="162" y="290" width="3" height="15" fill="#54ffff"/>
<rect x="168" y="302" width="1" height="5" fill="#ff3232"/>
<rect x="167" y="304" width="1" height="1" fill="#ff3232"/>
<rect x="173" y="302" width="1" height="10" fill="#54ffff"/>
<rect x="172" y="304" width="3" height="7" fill="#54ffff"/>
<rect x="177" y="307" width="1" height="5" fill="#54ffff"/>
<rect x="176" y="308" width="3" height="3" fill="#54ffff"/>
<rect x="182" y="308" width="1" height="9" fill="#ff3232"/>
<rect x="181" y="308" width="3" height="7" fill="#ff3232"/>
<rect x="182" y="309" width="1" height="5" fill="#000"/>
<rect x="186" y="305" width="1" height="5" fill="#ff3232"/>
<rect x="185" y="307" width="3" height="3" fill="#ff3232"/>
<rect x="186" y="308" width="1" height="1" fill="#000"/>
<rect x="191" y="307" width="1" height="9" fill="#54ffff"/>
<rect x="190" y="308" width="3" height="8" fill="#54ffff"/>
<rect x="196" y="313" width="1" height="6" fill="#54ffff"/>
<rect x="195" y="314" width="3" height="1" fill="#54ffff"/>
<rect x="200" y="315" width="1" height="8" fill="#54ffff"/>
<rect x="199" y="315" width="3" height="5" fill="#54ffff"/>
<rect x="205" y="316" width="1" height="5" fill="#ff3232"/>
<rect x="204" y="319" width="3" height="2" fill="#ff3232"/>
<rect x="209" y="310" width="1" height="7" fill="#ff3232"/>
<rect x="208" y="313" width="3" height="4" fill="#ff3232"/>
<rect x="209" y="314" width="1" height="2" fill="#000"/>
<rect x="214" y="308" width="1" height="8" fill="#54ffff"/>
<rect x="213" y="313" width="1" height="1" fill="#54ffff"/>
<rect x="219" y="313" width="1" height="9" fill="#54ffff"/>
<rect x="218" y="314" width="3" height="8" fill="#54ffff"/>
<rect x="223" y="319" width="1" height="17" fill="#54ffff"/>
<rect x="222" y="323" width="3" height="11" fill="#54ffff"/>
<rect x="228" y="330" width="1" height="6" fill="#54ffff"/>
<rect x="227" y="333" width="3" height="1" fill="#54ffff"/>
<rect x="232" y="333" width="1" height="9" fill="#54ffff"/>
<rect x="231" y="336" width="3" height="3" fill="#54ffff"/>
<rect x="237" y="338" width="1" height="5" fill="#ff3232"/>
<rect x="236" y="338" width="3" height="3" fill="#ff3232"/>
<rect x="237" y="339" width="1" height="1" fill="#000"/>
<rect x="242" y="338" width="1" height="13" fill="#54ffff"/>
<rect x="241" y="340" width="3" height="3" fill="#54ffff"/>
<rect x="246" y="336" width="1" height="11" fill="#ff3232"/>
<rect x="245" y="341" width="3" height="6" fill="#ff3232"/>
<rect x="246" y="342" width="1" height="4" fill="#000"/>
<rect x="251" y="337" width="1" height="10" fill="#54ffff"/>
<rect x="250" y="341" width="3" height="6" fill="#54ffff"/>
<rect x="256" y="343" width="1" height="8" fill="#ff3232"/>
<rect x="255" y="344" width="3" height="5" fill="#ff3232"/>
<rect x="256" y="345" width="1" height="3" fill="#000"/>
<rect x="260" y="331" width="1" height="14" fill="#ff3232"/>
<rect x="259" y="331" width="3" height="14" fill="#ff3232"/>
<rect x="260" y="332" width="1" height="12" fill="#000"/>
<rect x="265" y="322" width="1" height="11" fill="#ff3232"/>
<rect x="264" y="328" width="3" height="4" fill="#ff3232"/>
<rect x="265" y="329" width="1" height="2" fill="#000"/>
<rect x="269" y="324" width="1" height="9" fill="#54ffff"/>
<rect x="268" y="328" width="3" height="3" fill="#54ffff"/>
<rect x="274" y="329" width="1" height="6" fill="#ff3232"/>
<rect x="273" y="329" width="3" height="3" fill="#ff3232"/>
<rect x="274" y="330" width="1" height="1" fill="#000"/>
<rect x="279" y="326" width="1" height="4" fill="#54ffff"/>
<rect x="278" y="328" width="3" height="2" fill="#54ffff"/>
<rect x="283" y="327" width="1" height="8" fill="#54ffff"/>
<rect x="282" y="327" width="3" height="4" fill="#54ffff"/>
<rect x="288" y="332" width="1" height="5" fill="#54ffff"/>
<rect x="287" y="333" width="3" height="1" fill="#54ffff"/>
<rect x="292" y="328" width="1" height="8" fill="#54ffff"/>
<rect x="291" y="333" width="3" height="3" fill="#54ffff"/>
<rect x="297" y="333" width="1" height="5" fill="#ff3232"/>
<rect x="296" y="333" width="3" height="3" fill="#ff3232"/>
<rect x="297" y="334" width="1" height="1" fill="#000"/>
<rect x="302" y="330" width="1" height="6" fill="#54ffff"/>
<rect x="301" y="333" width="3" height="2" fill="#54ffff"/>
<rect x="306" y="330" width="1" height="5" fill="#54ffff"/>
<rect x="305" y="333" width="1" height="1" fill="#54ffff"/>
<rect x="311" y="325" width="1" height="10" fill="#ff3232"/>
<rect x="310" y="325" width="3" height="9" fill="#ff3232"/>
<rect x="311" y="326" width="1" height="7" fill="#000"/>
<rect x="316" y="314" width="1" height="14" fill="#ff3232"/>
<rect x="315" y="317" width="3" height="11" fill="#ff3232"/>
<rect x="316" y="318" width="1" height="9" fill="#000"/>
<rect x="320" y="315" width="1" height="7" fill="#54ffff"/>
<rect x="319" y="317" width="3" height="4" fill="#54ffff"/>
<rect x="325" y="308" width="1" height="19" fill="#ff3232"/>
<rect x="324" y="312" width="3" height="9" fill="#ff3232"/>
<rect x="325" y="313" width="1" height="7" fill="#000"/>
<rect x="329" y="312" width="1" height="5" fill="#ff3232"/>
<rect x="328" y="314" width="3" height="2" fill="#ff3232"/>
<rect x="334" y="313" width="1" height="12" fill="#54ffff"/>
<rect x="333" y="314" width="3" height="10" fill="#54ffff"/>
<rect x="339" y="323" width="1" height="4" fill="#ff3232"/>
<rect x="338" y="323" width="3" height="3" fill="#ff3232"/>
<rect x="339" y="324" width="1" height="1" fill="#000"/>
<rect x="343" y="322" width="1" height="5" fill="#54ffff"/>
<rect x="342" y="323" width="3" height="3" fill="#54ffff"/>
<rect x="348" y="319" width="1" height="10" fill="#54ffff"/>
<rect x="347" y="326" width="3" height="2" fill="#54ffff"/>
<rect x="352" y="321" width="1" height="9" fill="#ff3232"/>
<rect x="351" y="323" width="3" height="7" fill="#ff3232"/>
<rect x="352" y="324" width="1" height="5" fill="#000"/>
<rect x="357" y="317" width="1" height="9" fill="#ff3232"/>
<rect x="356" y="317" width="3" height="9" fill="#ff3232"/>
<rect x="357" y="318" width="1" height="7" fill="#000"/>
<rect x="362" y="318" width="1" height="4" fill="#54ffff"/>
<rect x="361" y="318" width="3" height="2" fill="#54ffff"/>
<rect x="366" y="315" width="1" height="8" fill="#ff3232"/>
<rect x="365" y="318" width="3" height="5" fill="#ff3232"/>
<rect x="366" y="319" width="1" height="3" fill="#000"/>
<rect x="371" y="317" width="1" height="6" fill="#54ffff"/>
<rect x="370" y="319" width="3" height="3" fill="#54ffff"/>
<rect x="376" y="320" width="1" height="3" fill="#ff3232"/>
<rect x="375" y="321" width="3" height="2" fill="#ff3232"/>
<rect x="380" y="320" width="1" height="11" fill="#54ffff"/>
<rect x="379" y="321" width="3" height="6" fill="#54ffff"/>
<rect x="385" y="327" width="1" height="9" fill="#54ffff"/>
<rect x="384" y="327" width="3" height="7" fill="#54ffff"/>
<rect x="389" y="328" width="1" height="6" fill="#ff3232"/>
<rect x="388" y="333" width="1" height="1" fill="#ff3232"/>
<rect x="394" y="324" width="1" height="9" fill="#ff3232"/>
<rect x="393" y="325" width="3" height="8" fill="#ff3232"/>
<rect x="394" y="326" width="1" height="6" fill="#000"/>
<rect x="399" y="322" width="1" height="6" fill="#ff3232"/>
<rect x="398" y="323" width="3" height="3" fill="#ff3232"/>
<rect x="399" y="324" width="1" height="1" fill="#000"/>
<rect x="403" y="315" width="1" height="9" fill="#ff3232"/>
<rect x="402" y="316" width="3" height="8" fill="#ff3232"/>
<rect x="403" y="317" width="1" height="6" fill="#000"/>
<rect x="408" y="309" width="1" height="9" fill="#54ffff"/>
<rect x="407" y="316" width="3" height="1" fill="#54ffff"/>
<rect x="412" y="313" width="1" height="5" fill="#ff3232"/>
<rect x="411" y="313" width="3" height="5" fill="#ff3232"/>
<rect x="412" y="314" width="1" height="3" fill="#000"/>
<rect x="417" y="310" width="1" height="8" fill="#ff3232"/>
<rect x="416" y="310" width="3" height="8" fill="#ff3232"/>
<rect x="417" y="311" width="1" height="6" fill="#000"/>
<rect x="422" y="306" width="1" height="9" fill="#54ffff"/>
<rect x="421" y="311" width="3" height="3" fill="#54ffff"/>
<rect x="426" y="308" width="1" height="9" fill="#ff3232"/>
<rect x="425" y="311" width="3" height="5" fill="#ff3232"/>
<rect x="426" y="312" width="1" height="3" fill="#000"/>
<rect x="431" y="312" width="1" height="6" fill="#54ffff"/>
<rect x="430" y="312" width="3" height="1" fill="#54ffff"/>
<rect x="435" y="310" width="1" height="4" fill="#54ffff"/>
<rect x="434" y="312" width="1" height="1" fill="#54ffff"/>
<rect x="440" y="311" width="1" height="3" fill="#ff3232"/>
<rect x="439" y="312" width="3" height="2" fill="#ff3232"/>
<rect x="445" y="311" width="1" height="6" fill="#54ffff"/>
<rect x="444" y="312" width="3" height="3" fill="#54ffff"/>
<rect x="449" y="307" width="1" height="10" fill="#ff3232"/>
<rect x="448" y="311" width="3" height="4" fill="#ff3232"/>
<rect x="449" y="312" width="1" height="2" fill="#000"/>
<rect x="454" y="305" width="1" height="8" fill="#ff3232"/>
<rect x="453" y="307" width="3" height="5" fill="#ff3232"/>
<rect x="454" y="308" width="1" height="3" fill="#000"/>
<rect x="459" y="307" width="1" height="20" fill="#54ffff"/>
<rect x="458" y="307" width="3" height="12" fill="#54ffff"/>
<rect x="463" y="313" width="1" height="13" fill="#54ffff"/>
<rect x="462" y="319" width="3" height="4" fill="#54ffff"/>
<rect x="468" y="322" width="1" height="3" fill="#ff3232"/>
<rect x="467" y="322" width="3" height="2" fill="#ff3232"/>
<rect x="472" y="323" width="1" height="9" fill="#54ffff"/>
<rect x="471" y="323" width="3" height="7" fill="#54ffff"/>
<rect x="477" y="327" width="1" height="9" fill="#54ffff"/>
<rect x="476" y="329" width="3" height="6" fill="#54ffff"/>
<rect x="482" y="335" width="1" height="9" fill="#54ffff"/>
<rect x="481" y="335" width="3" height="6" fill="#54ffff"/>
<rect x="486" y="330" width="1" height="10" fill="#ff3232"/>
<rect x="485" y="334" width="3" height="6" fill="#ff3232"/>
<rect x="486" y="335" width="1" height="4" fill="#000"/>
<rect x="491" y="334" width="1" height="5" fill="#54ffff"/>
<rect x="490" y="335" width="3" height="3" fill="#54ffff"/>
<rect x="495" y="338" width="1" height="4" fill="#ff3232"/>
<rect x="494" y="340" width="3" height="2" fill="#ff3232"/>
<rect x="500" y="352" width="1" height="24" fill="#54ffff"/>
<rect x="499" y="352" width="3" height="24" fill="#54ffff"/>
<rect x="505" y="370" width="1" height="5" fill="#ff3232"/>
<rect x="504" y="370" width="3" height="4" fill="#ff3232"/>
<rect x="505" y="371" width="1" height="2" fill="#000"/>
<rect x="509" y="342" width="1" height="33" fill="#ff3232"/>
<rect x="508" y="346" width="3" height="29" fill="#ff3232"/>
<rect x="509" y="347" width="1" height="27" fill="#000"/>
<rect x="514" y="343" width="1" height="11" fill="#ff3232"/>
<rect x="513" y="347" width="3" height="3" fill="#ff3232"/>
<rect x="514" y="348" width="1" height="1" fill="#000"/>
<rect x="519" y="342" width="1" height="11" fill="#ff3232"/>
<rect x="518" y="342" width="3" height="11" fill="#ff3232"/>
<rect x="519" y="343" width="1" height="9" fill="#000"/>
<rect x="523" y="342" width="1" height="4" fill="#54ffff"/>
<rect x="522" y="342" width="3" height="2" fill="#54ffff"/>
<rect x="528" y="344" width="1" height="5" fill="#54ffff"/>
<rect x="527" y="344" width="3" height="4" fill="#54ffff"/>
<rect x="532" y="344" width="1" height="10" fill="#54ffff"/>
<rect x="531" y="348" width="3" height="3" fill="#54ffff"/>
<rect x="537" y="348" width="1" height="5" fill="#ff3232"/>
<rect x="536" y="349" width="3" height="4" fill="#ff3232"/>
<rect x="537" y="350" width="1" height="2" fill="#000"/>
<rect x="542" y="349" width="1" height="6" fill="#54ffff"/>
<rect x="541" y="351" width="3" height="2" fill="#54ffff"/>
<rect x="546" y="348" width="1" height="6" fill="#ff3232"/>
<rect x="545" y="348" width="3" height="6" fill="#ff3232"/>
<rect x="546" y="349" width="1" height="4" fill="#000"/>
<rect x="551" y="346" width="1" height="5" fill="#54ffff"/>
<rect x="550" y="346" width="3" height="4" fill="#54ffff"/>
<rect x="555" y="346" width="1" height="4" fill="#ff3232"/>
<rect x="554" y="347" width="3" height="3" fill="#ff3232"/>
<rect x="555" y="348" width="1" height="1" fill="#000"/>
<rect x="560" y="351" width="1" height="12" fill="#54ffff"/>
<rect x="559" y="355" width="3" height="5" fill="#54ffff"/>
<rect x="565" y="357" width="1" height="5" fill="#54ffff"/>
<rect x="564" y="360" width="3" height="1" fill="#54ffff"/>
<rect x="569" y="360" width="1" height="5" fill="#54ffff"/>
<rect x="568" y="361" width="3" height="1" fill="#54ffff"/>
<rect x="574" y="360" width="1" height="4" fill="#ff3232"/>
<rect x="573" y="360" width="3" height="3" fill="#ff3232"/>
<rect x="574" y="361" width="1" height="1" fill="#000"/>
<rect x="579" y="358" width="1" height="3" fill="#ff3232"/>
<rect x="578" y="358" width="3" height="3" fill="#ff3232"/>
<rect x="579" y="359" width="1" height="1" fill="#000"/>
<rect x="583" y="354" width="1" height="5" fill="#ff3232"/>
<rect x="582" y="354" width="3" height="5" fill="#ff3232"/>
<rect x="583" y="355" width="1" height="3" fill="#000"/>
<rect x="588" y="335" width="1" height="17" fill="#ff3232"/>
<rect x="587" y="337" width="3" height="15" fill="#ff3232"/>
<rect x="588" y="338" width="1" height="13" fill="#000"/>
<rect x="592" y="329" width="1" height="14" fill="#ff3232"/>
<rect x="591" y="329" width="3" height="12" fill="#ff3232"/>
<rect x="592" y="330" width="1" height="10" fill="#000"/>
<rect x="597" y="320" width="1" height="18" fill="#ff3232"/>
<rect x="596" y="327" width="3" height="3" fill="#ff3232"/>
<rect x="597" y="328" width="1" height="1" fill="#000"/>
<rect x="602" y="316" width="1" height="20" fill="#ff3232"/>
<rect x="601" y="316" width="3" height="15" fill="#ff3232"/>
<rect x="602" y="317" width="1" height="13" fill="#000"/>
<rect x="606" y="320" width="1" height="11" fill="#54ffff"/>
<rect x="605" y="320" width="3" height="10" fill="#54ffff"/>
<rect x="611" y="327" width="1" height="10" fill="#54ffff"/>
<rect x="610" y="330" width="3" height="6" fill="#54ffff"/>
<rect x="615" y="328" width="1" height="10" fill="#54ffff"/>
<rect x="614" y="335" width="3" height="3" fill="#54ffff"/>
<rect x="620" y="334" width="1" height="7" fill="#54ffff"/>
<rect x="619" y="339" width="3" height="2" fill="#54ffff"/>
<rect x="625" y="335" width="1" height="6" fill="#ff3232"/>
<rect x="624" y="335" width="3" height="6" fill="#ff3232"/>
<rect x="625" y="336" width="1" height="4" fill="#000"/>
<rect x="629" y="309" width="1" height="32" fill="#ff3232"/>
<rect x="628" y="316" width="3" height="24" fill="#ff3232"/>
<rect x="629" y="317" width="1" height="22" fill="#000"/>
<rect x="634" y="320" width="1" height="13" fill="#54ffff"/>
<rect x="633" y="322" width="3" height="11" fill="#54ffff"/>
<rect x="639" y="328" width="1" height="10" fill="#54ffff"/>
<rect x="638" y="333" width="3" height="5" fill="#54ffff"/>
<rect x="643" y="336" width="1" height="6" fill="#54ffff"/>
<rect x="642" y="341" width="1" height="1" fill="#54ffff"/>
<rect x="648" y="334" width="1" height="9" fill="#ff3232"/>
<rect x="647" y="337" width="3" height="6" fill="#ff3232"/>
<rect x="648" y="338" width="1" height="4" fill="#000"/>
<rect x="652" y="334" width="1" height="7" fill="#ff3232"/>
<rect x="651" y="335" width="3" height="3" fill="#ff3232"/>
<rect x="652" y="336" width="1" height="1" fill="#000"/>
<rect x="657" y="335" width="1" height="9" fill="#54ffff"/>
<rect x="656" y="335" width="3" height="9" fill="#54ffff"/>
<rect x="662" y="338" width="1" height="7" fill="#ff3232"/>
<rect x="661" y="338" width="3" height="7" fill="#ff3232"/>
<rect x="662" y="339" width="1" height="5" fill="#000"/>
<rect x="666" y="303" width="1" height="36" fill="#ff3232"/>
<rect x="665" y="303" width="3" height="36" fill="#ff3232"/>
<rect x="666" y="304" width="1" height="34" fill="#000"/>
<rect x="671" y="264" width="1" height="20" fill="#ff3232"/>
<rect x="670" y="265" width="3" height="13" fill="#ff3232"/>
<rect x="671" y="266" width="1" height="11" fill="#000"/>
<rect x="675" y="247" width="1" height="34" fill="#54ffff"/>
<rect x="674" y="261" width="3" height="20" fill="#54ffff"/>
<rect x="680" y="265" width="1" height="26" fill="#54ffff"/>
<rect x="679" y="276" width="3" height="3" fill="#54ffff"/>
<rect x="685" y="251" width="1" height="30" fill="#ff3232"/>
<rect x="684" y="274" width="1" height="1" fill="#ff3232"/>
<rect x="689" y="276" width="1" height="14" fill="#54ffff"/>
<rect x="688" y="277" width="3" height="8" fill="#54ffff"/>
<rect x="694" y="286" width="1" height="16" fill="#54ffff"/>
<rect x="693" y="288" width="3" height="11" fill="#54ffff"/>
<rect x="698" y="299" width="1" height="6" fill="#54ffff"/>
<rect x="697" y="300" width="3" height="3" fill="#54ffff"/>
<rect x="703" y="303" width="1" height="6" fill="#ff3232"/>
<rect x="702" y="304" width="3" height="3" fill="#ff3232"/>
<rect x="703" y="305" width="1" height="1" fill="#000"/>
<rect x="708" y="278" width="1" height="27" fill="#ff3232"/>
<rect x="707" y="281" width="3" height="19" fill="#ff3232"/>
<rect x="708" y="282" width="1" height="17" fill="#000"/>
<rect x="712" y="285" width="1" height="12" fill="#ff3232"/>
<rect x="711" y="289" width="3" height="6" fill="#ff3232"/>
<rect x="712" y="290" width="1" height="4" fill="#000"/>
<rect x="717" y="277" width="1" height="25" fill="#ff3232"/>
<rect x="716" y="282" width="3" height="12" fill="#ff3232"/>
<rect x="717" y="283" width="1" height="10" fill="#000"/>
<rect x="722" y="269" width="1" height="21" fill="#54ffff"/>
<rect x="721" y="285" width="3" height="2" fill="#54ffff"/>
<rect x="726" y="267" width="1" height="40" fill="#ff3232"/>
<rect x="725" y="281" width="3" height="13" fill="#ff3232"/>
<rect x="726" y="282" width="1" height="11" fill="#000"/>
<rect x="731" y="278" width="1" height="17" fill="#ff3232"/>
<rect x="730" y="286" width="3" height="4" fill="#ff3232"/>
<rect x="731" y="287" width="1" height="2" fill="#000"/>
<rect x="735" y="266" width="1" height="21" fill="#ff3232"/>
<rect x="734" y="271" width="3" height="16" fill="#ff3232"/>
<rect x="735" y="272" width="1" height="14" fill="#000"/>
<rect x="740" y="282" width="1" height="12" fill="#54ffff"/>
<rect x="739" y="285" width="3" height="3" fill="#54ffff"/>
<rect x="745" y="248" width="1" height="47" fill="#ff3232"/>
<rect x="744" y="248" width="3" height="45" fill="#ff3232"/>
<rect x="745" y="249" width="1" height="43" fill="#000"/>
<rect x="749" y="210" width="1" height="35" fill="#54ffff"/>
<rect x="748" y="240" width="1" height="1" fill="#54ffff"/>
<rect x="754" y="220" width="1" height="33" fill="#ff3232"/>
<rect x="753" y="233" width="3" height="20" fill="#ff3232"/>
<rect x="754" y="234" width="1" height="18" fill="#000"/>
<rect x="758" y="206" width="1" height="37" fill="#ff3232"/>
<rect x="757" y="212" width="3" height="27" fill="#ff3232"/>
<rect x="758" y="213" width="1" height="25" fill="#000"/>
<rect x="763" y="212" width="1" height="18" fill="#54ffff"/>
<rect x="762" y="212" width="3" height="16" fill="#54ffff"/>
<rect x="768" y="233" width="1" height="20" fill="#54ffff"/>
<rect x="767" y="233" width="3" height="17" fill="#54ffff"/>
<rect x="772" y="242" width="1" height="13" fill="#54ffff"/>
<rect x="771" y="253" width="1" height="1" fill="#54ffff"/>
<rect x="777" y="246" width="1" height="14" fill="#54ffff"/>
<rect x="776" y="253" width="3" height="2" fill="#54ffff"/>
<rect x="782" y="245" width="1" height="19" fill="#ff3232"/>
<rect x="781" y="245" width="3" height="10" fill="#ff3232"/>
<rect x="782" y="246" width="1" height="8" fill="#000"/>
<rect x="786" y="242" width="1" height="8" fill="#ff3232"/>
<rect x="785" y="245" width="3" height="5" fill="#ff3232"/>
<rect x="786" y="246" width="1" height="3" fill="#000"/>
<rect x="791" y="234" width="1" height="14" fill="#54ffff"/>
<rect x="790" y="243" width="3" height="4" fill="#54ffff"/>
<rect x="795" y="236" width="1" height="23" fill="#ff3232"/>
<rect x="794" y="240" width="3" height="12" fill="#ff3232"/>
<rect x="795" y="241" width="1" height="10" fill="#000"/>
<rect x="800" y="240" width="1" height="8" fill="#54ffff"/>
<rect x="799" y="243" width="3" height="1" fill="#54ffff"/>
<rect x="805" y="243" width="1" height="9" fill="#ff3232"/>
<rect x="804" y="246" width="3" height="6" fill="#ff3232"/>
<rect x="805" y="247" width="1" height="4" fill="#000"/>
<rect x="809" y="234" width="1" height="24" fill="#54ffff"/>
<rect x="808" y="248" width="3" height="8" fill="#54ffff"/>
<rect x="814" y="244" width="1" height="29" fill="#ff3232"/>
<rect x="813" y="249" width="3" height="12" fill="#ff3232"/>
<rect x="814" y="250" width="1" height="10" fill="#000"/>
<rect x="818" y="240" width="1" height="15" fill="#ff3232"/>
<rect x="817" y="243" width="3" height="10" fill="#ff3232"/>
<rect x="818" y="244" width="1" height="8" fill="#000"/>
<rect x="823" y="238" width="1" height="8" fill="#ff3232"/>
<rect x="822" y="241" width="3" height="4" fill="#ff3232"/>
<rect x="823" y="242" width="1" height="2" fill="#000"/>
<rect x="828" y="235" width="1" height="10" fill="#ff3232"/>
<rect x="827" y="236" width="3" height="6" fill="#ff3232"/>
<rect x="828" y="237" width="1" height="4" fill="#000"/>
<rect x="832" y="227" width="1" height="16" fill="#54ffff"/>
<rect x="831" y="236" width="3" height="5" fill="#54ffff"/>
<rect x="837" y="243" width="1" height="13" fill="#54ffff"/>
<rect x="836" y="243" width="3" height="13" fill="#54ffff"/>
<rect x="842" y="250" width="1" height="8" fill="#ff3232"/>
<rect x="841" y="250" width="3" height="8" fill="#ff3232"/>
<rect x="842" y="251" width="1" height="6" fill="#000"/>
<rect x="846" y="249" width="1" height="7" fill="#ff3232"/>
<rect x="845" y="252" width="3" height="2" fill="#ff3232"/>
<rect x="851" y="242" width="1" height="11" fill="#ff3232"/>
<rect x="850" y="243" width="3" height="9" fill="#ff3232"/>
<rect x="851" y="244" width="1" height="7" fill="#000"/>
<rect x="855" y="240" width="1" height="8" fill="#ff3232"/>
<rect x="854" y="240" width="3" height="5" fill="#ff3232"/>
<rect x="855" y="241" width="1" height="3" fill="#000"/>
<rect x="860" y="237" width="1" height="17" fill="#54ffff"/>
<rect x="859" y="242" width="3" height="6" fill="#54ffff"/>
<rect x="865" y="245" width="1" height="12" fill="#54ffff"/>
<rect x="864" y="250" width="3" height="3" fill="#54ffff"/>
<rect x="869" y="250" width="1" height="15" fill="#54ffff"/>
<rect x="868" y="253" width="3" height="4" fill="#54ffff"/>
<rect x="874" y="240" width="1" height="23" fill="#ff3232"/>
<rect x="873" y="241" width="3" height="22" fill="#ff3232"/>
<rect x="874" y="242" width="1" height="20" fill="#000"/>
<rect x="878" y="236" width="1" height="8" fill="#54ffff"/>
<rect x="877" y="237" width="3" height="3" fill="#54ffff"/>
<rect x="883" y="228" width="1" height="16" fill="#ff3232"/>
<rect x="882" y="231" width="3" height="11" fill="#ff3232"/>
<rect x="883" y="232" width="1" height="9" fill="#000"/>
<rect x="888" y="229" width="1" height="11" fill="#54ffff"/>
<rect x="887" y="230" width="3" height="2" fill="#54ffff"/>
<rect x="892" y="225" width="1" height="12" fill="#54ffff"/>
<rect x="891" y="236" width="3" height="1" fill="#54ffff"/>
<rect x="897" y="229" width="1" height="11" fill="#54ffff"/>
<rect x="896" y="237" width="3" height="1" fill="#54ffff"/>
<rect x="901" y="213" width="1" height="35" fill="#54ffff"/>
<rect x="900" y="236" width="3" height="8" fill="#54ffff"/>
<rect x="906" y="222" width="1" height="24" fill="#ff3232"/>
<rect x="905" y="233" width="3" height="13" fill="#ff3232"/>
<rect x="906" y="234" width="1" height="11" fill="#000"/>
<rect x="911" y="223" width="1" height="21" fill="#54ffff"/>
<rect x="910" y="231" width="3" height="12" fill="#54ffff"/>
<rect x="915" y="218" width="1" height="31" fill="#ff3232"/>
<rect x="914" y="229" width="3" height="18" fill="#ff3232"/>
<rect x="915" y="230" width="1" height="16" fill="#000"/>
<rect x="920" y="183" width="1" height="49" fill="#ff3232"/>
<rect x="919" y="183" width="3" height="44" fill="#ff3232"/>
<rect x="920" y="184" width="1" height="42" fill="#000"/>
<rect x="925" y="155" width="1" height="25" fill="#54ffff"/>
<rect x="924" y="161" width="3" height="15" fill="#54ffff"/>
<rect x="929" y="125" width="1" height="69" fill="#ff3232"/>
<rect x="928" y="125" width="3" height="55" fill="#ff3232"/>
<rect x="929" y="126" width="1" height="53" fill="#000"/>
<rect x="934" y="68" width="1" height="74" fill="#54ffff"/>
<rect x="933" y="97" width="3" height="30" fill="#54ffff"/>
<rect x="938" y="84" width="1" height="99" fill="#ff3232"/>
<rect x="937" y="99" width="3" height="84" fill="#ff3232"/>
<rect x="938" y="100" width="1" height="82" fill="#000"/>
<rect x="943" y="43" width="1" height="84" fill="#ff3232"/>
<rect x="942" y="69" width="3" height="36" fill="#ff3232"/>
<rect x="943" y="70" width="1" height="34" fill="#000"/>
<rect x="948" y="57" width="1" height="41" fill="#54ffff"/>
<rect x="947" y="85" width="3" height="11" fill="#54ffff"/>
<rect x="952" y="96" width="1" height="38" fill="#54ffff"/>
<rect x="951" y="96" width="3" height="35" fill="#54ffff"/>
<rect x="957" y="115" width="1" height="34" fill="#54ffff"/>
<rect x="956" y="126" width="3" height="2" fill="#54ffff"/>
<rect x="961" y="113" width="1" height="32" fill="#ff3232"/>
<rect x="960" y="113" width="3" height="21" fill="#ff3232"/>
<rect x="961" y="114" width="1" height="19" fill="#000"/>
<rect x="966" y="116" width="1" height="16" fill="#54ffff"/>
<rect x="965" y="116" width="3" height="13" fill="#54ffff"/>
<rect x="971" y="130" width="1" height="28" fill="#54ffff"/>
<rect x="970" y="135" width="3" height="1" fill="#54ffff"/>
<rect x="975" y="130" width="1" height="62" fill="#54ffff"/>
<rect x="974" y="131" width="3" height="61" fill="#54ffff"/>
<rect x="980" y="196" width="1" height="46" fill="#54ffff"/>
<rect x="979" y="198" width="3" height="39" fill="#54ffff"/>
<rect x="985" y="230" width="1" height="13" fill="#54ffff"/>
<rect x="984" y="230" width="3" height="6" fill="#54ffff"/>
<rect x="989" y="206" width="1" height="29" fill="#ff3232"/>
<rect x="988" y="214" width="3" height="13" fill="#ff3232"/>
<rect x="989" y="215" width="1" height="11" fill="#000"/>
<rect x="994" y="219" width="1" height="17" fill="#54ffff"/>
<rect x="993" y="219" width="3" height="16" fill="#54ffff"/>
<rect x="998" y="230" width="1" height="7" fill="#ffffff"/>
<rect x="996" y="236" width="2" height="1" fill="#ffffff"/>
<rect x="1003" y="230" width="1" height="11" fill="#ff3232"/>
<rect x="1002" y="231" width="3" height="9" fill="#ff3232"/>
<rect x="1003" y="232" width="1" height="7" fill="#000"/>
<rect x="1008" y="220" width="1" height="8" fill="#ff3232"/>
<rect x="1007" y="221" width="3" height="6" fill="#ff3232"/>
<rect x="1008" y="222" width="1" height="4" fill="#000"/>
<rect x="1012" y="220" width="1" height="9" fill="#54ffff"/>
<rect x="1011" y="221" width="3" height="8" fill="#54ffff"/>
<rect x="1017" y="227" width="1" height="7" fill="#ff3232"/>
<rect x="1016" y="227" width="3" height="3" fill="#ff3232"/>
<rect x="1017" y="228" width="1" height="1" fill="#000"/>
<rect x="1021" y="224" width="1" height="7" fill="#ff3232"/>
<rect x="1020" y="225" width="3" height="3" fill="#ff3232"/>
<rect x="1021" y="226" width="1" height="1" fill="#000"/>
<rect x="1026" y="214" width="1" height="18" fill="#54ffff"/>
<rect x="1025" y="226" width="3" height="2" fill="#54ffff"/>
<rect x="1031" y="210" width="1" height="21" fill="#ff3232"/>
<rect x="1030" y="223" width="3" height="8" fill="#ff3232"/>
<rect x="1031" y="224" width="1" height="6" fill="#000"/>
<rect x="1035" y="212" width="1" height="17" fill="#ff3232"/>
<rect x="1034" y="212" width="3" height="11" fill="#ff3232"/>
<rect x="1035" y="213" width="1" height="9" fill="#000"/>
<rect x="1040" y="210" width="1" height="26" fill="#54ffff"/>
<rect x="1039" y="212" width="3" height="13" fill="#54ffff"/>
<rect x="1045" y="232" width="1" height="7" fill="#ff3232"/>
<rect x="1044" y="232" width="3" height="4" fill="#ff3232"/>
<rect x="1045" y="233" width="1" height="2" fill="#000"/>
<rect x="1049" y="223" width="1" height="14" fill="#ff3232"/>
<rect x="1048" y="234" width="3" height="3" fill="#ff3232"/>
<rect x="1049" y="235" width="1" height="1" fill="#000"/>
<rect x="1054" y="224" width="1" height="15" fill="#54ffff"/>
<rect x="1053" y="235" width="3" height="1" fill="#54ffff"/>
<rect x="1058" y="235" width="1" height="11" fill="#ff3232"/>
<rect x="1057" y="235" width="1" height="1" fill="#ff3232"/>
<polyline points="2.5,455.8 6.5,454.6 11.5,453.5 16.5,452.7 20.5,452.6 25.5,452.5 29.5,452.6 34.5,453.2 39.5,453.9 43.5,454.6 48.5,455.5 53.5,456.0 57.5,456.3 62.5,456.6 66.5,456.9 71.5,457.4 76.5,457.9 80.5,458.2 85.5,458.7 89.5,459.1 94.5,459.5 99.5,459.9 103.5,460.1 108.5,460.4 113.5,460.5 117.5,460.5 122.5,460.5 126.5,459.6 131.5,458.1 136.5,456.2 140.5,454.6 145.5,452.7 149.5,451.8 154.5,450.8 159.5,449.9 163.5,449.1 168.5,448.3 173.5,447.4 177.5,446.8 182.5,446.2 186.5,445.7 191.5,445.3 196.5,444.8 200.5,445.4 205.5,447.3 209.5,449.1 214.5,451.2 219.5,453.4 223.5,455.3 228.5,457.8 232.5,459.8 237.5,462.3 242.5,464.8 246.5,466.8 251.5,469.3 256.5,471.8 260.5,473.8 265.5,476.3 269.5,478.3 274.5,480.8 279.5,482.7 283.5,483.6 288.5,486.0 292.5,487.7 297.5,489.4 302.5,491.1 306.5,492.3 311.5,492.4 316.5,492.6 320.5,492.6 325.5,492.5 329.5,492.5 334.5,492.5 339.5,492.4 343.5,492.4 348.5,492.4 352.5,492.3 357.5,492.3 362.5,492.3 366.5,492.3 371.5,492.3 376.5,492.3 380.5,492.3 385.5,492.3 389.5,492.3 394.5,492.3 399.5,492.3 403.5,492.3 408.5,492.2 412.5,492.0 417.5,491.8 422.5,490.8 426.5,489.7 431.5,488.3 435.5,487.1 440.5,485.6 445.5,484.0 449.5,482.8 454.5,481.2 459.5,479.6 463.5,478.2 468.5,476.4 472.5,474.8 477.5,472.7 482.5,470.6 486.5,469.0 491.5,466.9 495.5,465.2 500.5,463.3 505.5,461.4 509.5,459.9 514.5,458.3 519.5,456.8 523.5,455.6 528.5,453.6 532.5,451.9 537.5,450.8 542.5,450.0 546.5,450.0 551.5,450.0 555.5,450.0 560.5,450.0 565.5,450.0 569.5,449.9 574.5,449.9 579.5,449.8 583.5,449.7 588.5,449.4 592.5,449.1 597.5,448.7 602.5,448.5 606.5,448.3 611.5,448.0 615.5,447.9 620.5,447.6 625.5,447.3 629.5,447.0 634.5,446.7 639.5,446.3 643.5,446.0 648.5,445.6 652.5,445.2 657.5,444.8 662.5,444.2 666.5,443.9 671.5,443.6 675.5,443.3 680.5,443.0 685.5,442.7 689.5,442.5 694.5,442.2 698.5,442.0 703.5,441.9 708.5,441.8 712.5,441.8 717.5,441.8 722.5,441.7 726.5,441.7 731.5,441.6 735.5,441.6 740.5,441.6 745.5,441.6 749.5,441.6 754.5,441.6 758.5,441.6 763.5,441.8 768.5,442.6 772.5,442.7 777.5,442.7 782.5,442.7 786.5,442.7 791.5,442.7 795.5,442.7 800.5,442.7 805.5,442.5 809.5,442.2 814.5,441.9 818.5,441.7 823.5,440.6 828.5,439.3 832.5,438.3 837.5,437.1 842.5,435.8 846.5,434.8 851.5,434.1 855.5,434.0 860.5,434.0 865.5,433.9 869.5,435.0 874.5,436.3 878.5,437.1 883.5,438.0 888.5,438.7 892.5,439.2 897.5,439.8 901.5,440.1 906.5,440.4 911.5,440.8 915.5,441.2 920.5,441.7 925.5,441.9 929.5,442.0 934.5,442.2 938.5,442.4 943.5,442.5 948.5,442.7 952.5,443.1 957.5,443.7 961.5,444.2 966.5,444.7 971.5,444.7 975.5,444.7 980.5,444.8 985.5,444.8 989.5,444.8 994.5,444.8 998.5,444.8 1003.5,444.8 1008.5,444.9 1012.5,444.9 1017.5,444.9 1021.5,444.9 1026.5,445.4 1031.5,446.1 1035.5,446.9 1040.5,448.0 1045.5,449.1 1049.5,450.0 1054.5,451.1 1058.5,451.9" fill="none" stroke="#00ff00" stroke-width="1"/>
<polyline points="2.5,599.7 6.5,598.8 11.5,597.6 16.5,596.2 20.5,595.5 25.5,594.9 29.5,595.0 34.5,595.0 39.5,595.1 43.5,595.1 48.5,595.2 53.5,595.4 57.5,595.6 62.5,595.9 66.5,595.9 71.5,595.8 76.5,595.8 80.5,595.8 85.5,595.7 89.5,595.6 94.5,595.1 99.5,594.5 103.5,594.2 108.5,593.7 113.5,593.2 117.5,592.9 122.5,592.5 126.5,592.2 131.5,591.7 136.5,591.3 140.5,590.9 145.5,590.5 149.5,590.1 154.5,589.6 159.5,589.2 163.5,588.9 168.5,588.6 173.5,588.4 177.5,588.3 182.5,588.1 186.5,588.0 191.5,587.9 196.5,588.0 200.5,588.1 205.5,588.2 209.5,588.3 214.5,588.4 219.5,588.7 223.5,588.9 228.5,589.1 232.5,589.3 237.5,589.6 242.5,589.8 246.5,590.1 251.5,590.4 256.5,590.8 260.5,591.1 265.5,591.5 269.5,591.8 274.5,592.2 279.5,592.5 283.5,592.8 288.5,594.5 292.5,595.7 297.5,596.7 302.5,597.5 306.5,597.9 311.5,598.4 316.5,598.9 320.5,599.2 325.5,599.4 329.5,599.7 334.5,599.9 339.5,600.2 343.5,600.5 348.5,599.8 352.5,599.1 357.5,598.3 362.5,597.5 366.5,596.9 371.5,596.2 376.5,595.5 380.5,595.0 385.5,594.9 389.5,594.9 394.5,594.9 399.5,595.0 403.5,595.3 408.5,595.7 412.5,596.0 417.5,596.2 422.5,596.4 426.5,596.5 431.5,596.7 435.5,596.7 440.5,596.7 445.5,596.7 449.5,596.7 454.5,596.7 459.5,596.7 463.5,596.5 468.5,596.2 472.5,595.9 477.5,596.2 482.5,596.5 486.5,596.8 491.5,597.1 495.5,597.3 500.5,597.6 505.5,597.9 509.5,598.1 514.5,598.3 519.5,598.6 523.5,598.8 528.5,599.0 532.5,599.1 537.5,599.3 542.5,599.5 546.5,599.8 551.5,600.1 555.5,600.4 560.5,600.8 565.5,601.2 569.5,601.6 574.5,602.1 579.5,602.3 583.5,602.5 588.5,602.7 592.5,602.5 597.5,601.8 602.5,601.0 606.5,600.5 611.5,599.9 615.5,599.5 620.5,599.2 625.5,599.6 629.5,600.0 634.5,600.3 639.5,600.5 643.5,600.6 648.5,600.6 652.5,600.6 657.5,600.6 662.5,600.6 666.5,599.8 671.5,598.5 675.5,597.4 680.5,596.3 685.5,595.2 689.5,594.3 694.5,593.3 698.5,592.4 703.5,591.4 708.5,590.3 712.5,589.5 717.5,588.5 722.5,587.6 726.5,586.8 731.5,585.9 735.5,585.2 740.5,584.3 745.5,583.3 749.5,582.6 754.5,581.5 758.5,580.4 763.5,579.1 768.5,577.8 772.5,576.7 777.5,575.4 782.5,574.0 786.5,572.9 791.5,571.1 795.5,569.5 800.5,567.6 805.5,565.9 809.5,564.5 814.5,562.9 818.5,561.6 823.5,559.9 828.5,558.2 832.5,556.9 837.5,555.4 842.5,553.9 846.5,552.9 851.5,551.8 855.5,551.1 860.5,550.3 865.5,549.5 869.5,549.1 874.5,549.1 878.5,549.3 883.5,549.6 888.5,549.9 892.5,550.2 897.5,550.5 901.5,550.8 906.5,551.0 911.5,551.3 915.5,551.5 920.5,551.6 925.5,551.7 929.5,551.7 934.5,551.7 938.5,551.8 943.5,551.8 948.5,551.8 952.5,551.8 957.5,551.9 961.5,551.9 966.5,551.9 971.5,550.9 975.5,550.9 980.5,552.4 985.5,553.7 989.5,554.8 994.5,556.1 998.5,557.1 1003.5,558.5 1008.5,559.8 1012.5,560.9 1017.5,562.3 1021.5,563.4 1026.5,564.8 1031.5,566.2 1035.5,567.3 1040.5,568.7 1045.5,570.0 1049.5,571.2 1054.5,572.5 1058.5,573.5" fill="none" stroke="#c0c0c0" stroke-width="1"/>
<polyline points="2.5,481.4 6.5,479.7 11.5,485.9 16.5,495.1 20.5,504.2 25.5,525.1 29.5,536.0 34.5,528.9 39.5,511.4 43.5,501.4 48.5,491.3 53.5,476.7 57.5,482.0 62.5,488.9 66.5,506.8 71.5,508.0 76.5,527.7 80.5,536.5 85.5,535.7 89.5,526.3 94.5,532.3 99.5,545.7 103.5,559.0 108.5,559.5 113.5,564.5 117.5,565.4 122.5,563.9 126.5,566.5 131.5,573.2 136.5,577.8 140.5,578.6 145.5,580.1 149.5,571.7 154.5,564.7 159.5,557.0 163.5,568.7 168.5,576.5 173.5,585.4 177.5,591.4 182.5,587.6 186.5,577.8 191.5,584.6 196.5,585.6 200.5,588.3 205.5,588.3 209.5,578.7 214.5,571.8 219.5,581.7 223.5,587.6 228.5,591.6 232.5,593.4 237.5,593.6 242.5,590.3 246.5,586.6 251.5,588.5 256.5,587.6 260.5,571.8 265.5,556.1 269.5,548.2 274.5,541.8 279.5,536.0 283.5,532.9 288.5,534.9 292.5,538.6 297.5,537.2 302.5,539.2 306.5,536.0 311.5,514.9 316.5,494.5 320.5,486.6 325.5,477.5 329.5,473.7 334.5,482.0 339.5,487.6 343.5,494.0 348.5,508.1 352.5,513.6 357.5,507.1 362.5,507.4 366.5,504.9 371.5,508.7 376.5,510.2 380.5,521.1 385.5,541.2 389.5,557.1 394.5,552.9 399.5,545.9 403.5,526.2 408.5,514.4 412.5,500.0 417.5,482.5 422.5,482.8 426.5,476.1 431.5,476.5 435.5,475.8 440.5,474.8 445.5,477.9 449.5,474.5 454.5,468.1 459.5,482.5 463.5,499.3 468.5,511.7 472.5,531.5 477.5,554.2 482.5,567.1 486.5,566.8 491.5,571.8 495.5,579.2 500.5,588.2 505.5,588.6 509.5,571.7 514.5,561.2 519.5,549.7 523.5,542.8 528.5,541.6 532.5,543.5 537.5,543.1 542.5,545.5 546.5,543.9 551.5,539.7 555.5,531.9 560.5,539.9 565.5,544.4 569.5,547.0 574.5,546.9 579.5,543.9 583.5,533.4 588.5,505.2 592.5,483.8 597.5,476.4 602.5,465.2 606.5,471.4 611.5,482.7 615.5,493.2 620.5,504.2 625.5,505.3 629.5,491.1 634.5,497.1 639.5,506.7 643.5,517.0 648.5,519.4 652.5,518.7 657.5,527.0 662.5,527.6 666.5,499.0 671.5,478.7 675.5,483.1 680.5,486.1 685.5,485.9 689.5,491.5 694.5,503.3 698.5,514.3 703.5,521.8 708.5,513.6 712.5,513.0 717.5,507.9 722.5,508.0 726.5,504.4 731.5,504.5 735.5,496.4 740.5,500.5 745.5,480.4 749.5,479.3 754.5,475.7 758.5,467.5 763.5,469.3 768.5,482.6 772.5,494.1 777.5,502.4 782.5,502.6 786.5,502.8 791.5,503.3 795.5,501.3 800.5,502.0 805.5,503.6 809.5,509.9 814.5,510.2 818.5,509.9 823.5,509.1 828.5,505.1 832.5,504.6 837.5,524.2 842.5,533.8 846.5,540.6 851.5,535.1 855.5,518.5 860.5,518.2 865.5,523.2 869.5,531.2 874.5,517.8 878.5,506.8 883.5,488.7 888.5,478.8 892.5,479.1 897.5,479.5 901.5,494.4 906.5,497.7 911.5,509.8 915.5,504.6 920.5,482.6 925.5,478.5 929.5,465.7 934.5,473.4 938.5,470.6 943.5,467.3 948.5,470.9 952.5,483.9 957.5,490.8 961.5,491.9 966.5,497.3 971.5,503.0 975.5,522.0 980.5,546.9 985.5,563.3 989.5,568.4 994.5,577.4 998.5,583.9 1003.5,586.8 1008.5,587.5 1012.5,590.5 1017.5,591.1 1021.5,591.4 1026.5,592.5 1031.5,592.0 1035.5,588.0 1040.5,587.0 1045.5,587.9 1049.5,589.8 1054.5,592.7 1058.5,592.6" fill="none" stroke="#ffffff" stroke-width="1"/>
<polyline points="2.5,485.1 6.5,483.3 11.5,484.2 16.5,487.8 20.5,493.3 25.5,503.9 29.5,514.6 34.5,519.4 39.5,516.7 43.5,511.6 48.5,504.8 53.5,495.4 57.5,491.0 62.5,490.3 66.5,495.8 71.5,499.9 76.5,509.2 80.5,518.3 85.5,524.1 89.5,524.8 94.5,527.3 99.5,533.5 103.5,542.0 108.5,547.8 113.5,553.4 117.5,557.4 122.5,559.5 126.5,561.8 131.5,565.6 136.5,569.7 140.5,572.7 145.5,575.1 149.5,574.0 154.5,570.9 159.5,566.3 163.5,567.1 168.5,570.2 173.5,575.3 177.5,580.6 182.5,583.0 186.5,581.3 191.5,582.4 196.5,583.4 200.5,585.0 205.5,586.1 209.5,583.7 214.5,579.7 219.5,580.4 223.5,582.8 228.5,585.7 232.5,588.3 237.5,590.1 242.5,590.1 246.5,589.0 251.5,588.8 256.5,588.4 260.5,582.9 265.5,573.9 269.5,565.3 274.5,557.5 279.5,550.3 283.5,544.5 288.5,541.3 292.5,540.4 297.5,539.3 302.5,539.3 306.5,538.2 311.5,530.4 316.5,518.5 320.5,507.8 325.5,497.7 329.5,489.7 334.5,487.1 339.5,487.3 343.5,489.5 348.5,495.7 352.5,501.7 357.5,503.5 362.5,504.8 366.5,504.8 371.5,506.1 376.5,507.5 380.5,512.0 385.5,521.8 389.5,533.5 394.5,540.0 399.5,542.0 403.5,536.7 408.5,529.3 412.5,519.5 417.5,507.2 422.5,499.0 426.5,491.4 431.5,486.5 435.5,482.9 440.5,480.2 445.5,479.4 449.5,477.8 454.5,474.6 459.5,477.2 463.5,484.6 468.5,493.6 472.5,506.2 477.5,522.2 482.5,537.2 486.5,547.0 491.5,555.3 495.5,563.3 500.5,571.6 505.5,577.3 509.5,575.4 514.5,570.7 519.5,563.7 523.5,556.7 528.5,551.7 532.5,549.0 537.5,547.0 542.5,546.5 546.5,545.6 551.5,543.6 555.5,539.7 560.5,539.8 565.5,541.3 569.5,543.2 574.5,544.4 579.5,544.3 583.5,540.6 588.5,528.8 592.5,513.8 597.5,501.3 602.5,489.3 606.5,483.3 611.5,483.1 615.5,486.5 620.5,492.4 625.5,496.7 629.5,494.8 634.5,495.6 639.5,499.3 643.5,505.2 648.5,509.9 652.5,512.8 657.5,517.6 662.5,520.9 666.5,513.6 671.5,502.0 675.5,495.7 680.5,492.5 685.5,490.3 689.5,490.7 694.5,494.9 698.5,501.4 703.5,508.2 708.5,510.0 712.5,511.0 717.5,510.0 722.5,509.3 726.5,507.7 731.5,506.6 735.5,503.2 740.5,502.3 745.5,495.0 749.5,489.8 754.5,485.1 758.5,479.2 763.5,475.9 768.5,478.2 772.5,483.5 777.5,489.8 782.5,494.1 786.5,497.0 791.5,499.1 795.5,499.8 800.5,500.6 805.5,501.6 809.5,504.3 814.5,506.3 818.5,507.5 823.5,508.1 828.5,507.1 832.5,506.3 837.5,512.2 842.5,519.4 846.5,526.5 851.5,529.4 855.5,525.7 860.5,523.2 865.5,523.2 869.5,525.9 874.5,523.2 878.5,517.7 883.5,508.0 888.5,498.3 892.5,491.9 897.5,487.8 901.5,490.0 906.5,492.6 911.5,498.3 915.5,500.4 920.5,494.5 925.5,489.2 929.5,481.3 934.5,478.7 938.5,476.0 943.5,473.1 948.5,472.4 952.5,476.2 957.5,481.1 961.5,484.7 966.5,488.9 971.5,493.6 975.5,503.1 980.5,517.7 985.5,532.9 989.5,544.7 994.5,555.6 998.5,565.0 1003.5,572.3 1008.5,577.4 1012.5,581.8 1017.5,584.9 1021.5,587.0 1026.5,588.8 1031.5,589.9 1035.5,589.3 1040.5,588.5 1045.5,588.3 1049.5,588.8 1054.5,590.1 1058.5,590.9" fill="none" stroke="#ffff00" stroke-width="1"/>
<polyline points="2.5,474.0 6.5,472.5 11.5,489.4 16.5,509.8 20.5,526.1 25.5,567.4 29.5,578.8 34.5,548.0 39.5,500.9 43.5,480.9 48.5,464.2 53.5,439.1 57.5,464.2 62.5,486.2 66.5,528.8 71.5,524.4 76.5,564.9 80.5,573.0 85.5,558.9 89.5,529.4 94.5,542.3 99.5,570.3 103.5,593.0 108.5,582.9 113.5,586.7 117.5,581.4 122.5,572.6 126.5,575.7 131.5,588.4 136.5,593.9 140.5,590.5 145.5,589.9 149.5,567.1 154.5,552.3 159.5,538.6 163.5,572.0 168.5,589.1 173.5,605.7 177.5,612.8 182.5,597.0 186.5,570.9 191.5,589.1 196.5,589.8 200.5,594.7 205.5,592.6 209.5,568.8 214.5,556.0 219.5,584.4 223.5,597.3 228.5,603.4 232.5,603.6 237.5,600.7 242.5,590.5 246.5,581.9 251.5,587.8 256.5,585.9 260.5,549.7 265.5,520.5 269.5,513.8 274.5,510.5 279.5,507.3 283.5,509.6 288.5,522.0 292.5,535.0 297.5,532.9 302.5,539.0 306.5,531.5 311.5,484.0 316.5,446.6 320.5,444.1 325.5,437.0 329.5,441.7 334.5,471.8 339.5,488.2 343.5,502.8 348.5,532.9 352.5,537.4 357.5,514.4 362.5,512.7 366.5,505.0 371.5,514.0 376.5,515.6 380.5,539.3 385.5,580.2 389.5,604.2 394.5,578.7 399.5,553.9 403.5,505.1 408.5,484.7 412.5,460.9 417.5,433.1 422.5,450.3 426.5,445.6 431.5,456.7 435.5,461.7 440.5,463.9 445.5,474.8 449.5,467.9 454.5,455.2 459.5,493.1 463.5,528.8 468.5,547.7 472.5,582.0 477.5,618.2 482.5,626.8 486.5,606.2 491.5,604.9 495.5,611.1 500.5,621.4 505.5,611.2 509.5,564.2 514.5,542.2 519.5,521.8 523.5,514.9 528.5,521.5 532.5,532.7 537.5,535.3 542.5,543.5 546.5,540.4 551.5,531.7 555.5,516.1 560.5,540.1 565.5,550.6 569.5,554.6 574.5,551.7 579.5,543.3 583.5,518.8 588.5,457.9 592.5,423.7 597.5,426.5 602.5,417.1 606.5,447.6 611.5,481.8 615.5,506.7 620.5,527.9 625.5,522.4 629.5,483.7 634.5,500.0 639.5,521.6 643.5,540.6 648.5,538.3 652.5,530.4 657.5,545.8 662.5,541.0 666.5,469.7 671.5,432.3 675.5,457.9 680.5,473.2 685.5,477.1 689.5,493.0 694.5,520.2 698.5,540.2 703.5,549.0 708.5,520.9 712.5,517.0 717.5,503.8 722.5,505.5 726.5,497.9 731.5,500.3 735.5,482.9 740.5,496.8 745.5,451.3 749.5,458.3 754.5,457.0 758.5,444.1 763.5,456.0 768.5,491.6 772.5,515.3 777.5,527.7 782.5,519.8 786.5,514.4 791.5,511.8 795.5,504.3 800.5,505.0 805.5,507.8 809.5,520.9 814.5,518.1 818.5,514.8 823.5,511.3 828.5,501.2 832.5,501.3 837.5,548.2 842.5,562.5 846.5,568.9 851.5,546.5 855.5,503.9 860.5,508.1 865.5,523.2 869.5,541.9 874.5,507.0 878.5,485.0 883.5,449.9 888.5,439.7 892.5,453.5 897.5,463.0 901.5,503.2 906.5,508.1 911.5,532.8 915.5,513.0 920.5,458.7 925.5,457.3 929.5,434.4 934.5,462.8 938.5,459.9 943.5,455.7 948.5,468.1 952.5,499.2 957.5,510.2 961.5,506.4 966.5,514.2 971.5,521.7 975.5,559.8 980.5,605.5 985.5,624.0 989.5,615.9 994.5,620.9 998.5,621.6 1003.5,615.9 1008.5,607.9 1012.5,608.0 1017.5,603.6 1021.5,600.1 1026.5,599.7 1031.5,596.2 1035.5,585.5 1040.5,583.9 1045.5,587.2 1049.5,591.9 1054.5,597.9 1058.5,595.9" fill="none" stroke="#ff00ff" stroke-width="1"/>
<rect x="121" y="630" width="1" height="17" fill="#b00000"/>
<rect x="222" y="630" width="1" height="17" fill="#b00000"/>
<rect x="305" y="630" width="1" height="17" fill="#b00000"/>
<rect x="388" y="630" width="1" height="17" fill="#b00000"/>
<rect x="485" y="630" width="1" height="17" fill="#b00000"/>
<rect x="582" y="630" width="1" height="17" fill="#b00000"/>
<rect x="670" y="630" width="1" height="17" fill="#b00000"/>
<rect x="762" y="630" width="1" height="17" fill="#b00000"/>
<rect x="965" y="630" width="1" height="17" fill="#b00000"/>
<rect x="146" y="631" width="1" height="2" fill="#b00000"/>
<rect x="172" y="631" width="1" height="2" fill="#b00000"/>
<rect x="197" y="631" width="1" height="2" fill="#b00000"/>
<rect x="243" y="631" width="1" height="2" fill="#b00000"/>
<rect x="264" y="631" width="1" height="2" fill="#b00000"/>
<rect x="284" y="631" width="1" height="2" fill="#b00000"/>
<rect x="326" y="631" width="1" height="2" fill="#b00000"/>
<rect x="347" y="631" width="1" height="2" fill="#b00000"/>
<rect x="367" y="631" width="1" height="2" fill="#b00000"/>
<rect x="412" y="631" width="1" height="2" fill="#b00000"/>
<rect x="437" y="631" width="1" height="2" fill="#b00000"/>
<rect x="461" y="631" width="1" height="2" fill="#b00000"/>
<rect x="509" y="631" width="1" height="2" fill="#b00000"/>
<rect x="534" y="631" width="1" height="2" fill="#b00000"/>
<rect x="558" y="631" width="1" height="2" fill="#b00000"/>
<rect x="604" y="631" width="1" height="2" fill="#b00000"/>
<rect x="626" y="631" width="1" height="2" fill="#b00000"/>
<rect x="648" y="631" width="1" height="2" fill="#b00000"/>
<rect x="693" y="631" width="1" height="2" fill="#b00000"/>
<rect x="716" y="631" width="1" height="2" fill="#b00000"/>
<rect x="739" y="631" width="1" height="2" fill="#b00000"/>
<rect x="789" y="631" width="1" height="2" fill="#b00000"/>
<rect x="815" y="631" width="1" height="2" fill="#b00000"/>
<rect x="842" y="631" width="1" height="2" fill="#b00000"/>
<rect x="892" y="631" width="1" height="2" fill="#b00000"/>
<rect x="917" y="631" width="1" height="2" fill="#b00000"/>
<rect x="941" y="631" width="1" height="2" fill="#b00000"/>
<rect x="989" y="631" width="1" height="2" fill="#b00000"/>
<rect x="1014" y="631" width="1" height="2" fill="#b00000"/>
<rect x="1038" y="631" width="1" height="2" fill="#b00000"/>
<rect x="812" y="630" width="1" height="17" fill="#b00000"/>
<rect x="890" y="630" width="1" height="17" fill="#b00000"/>
<rect x="813" y="631" width="77" height="15" fill="#000080"/>
<rect x="742" y="388" width="1" height="1" fill="#ff0000"/>
<rect x="743" y="388" width="1" height="1" fill="#ff0000"/>
<rect x="744" y="388" width="1" height="1" fill="#ff0000"/>
<rect x="745" y="388" width="1" height="1" fill="#ff0000"/>
<rect x="741" y="389" width="1" height="1" fill="#ff0000"/>
<rect x="742" y="389" width="1" height="1" fill="#ff0000"/>
<rect x="745" y="389" width="1" height="1" fill="#ff0000"/>
<rect x="746" y="389" width="1" height="1" fill="#ff0000"/>
<rect x="741" y="390" width="1" height="1" fill="#ff0000"/>
<rect x="742" y="390" width="1" height="1" fill="#ff0000"/>
<rect x="743" y="390" width="1" height="1" fill="#ff0000"/>
<rect x="742" y="391" width="1" height="1" fill="#ff0000"/>
<rect x="743" y="391" width="1" height="1" fill="#ff0000"/>
<rect x="744" y="391" width="1" height="1" fill="#ff0000"/>
<rect x="745" y="391" width="1" height="1" fill="#ff0000"/>
<rect x="744" y="392" width="1" height="1" fill="#ff0000"/>
<rect x="745" y="392" width="1" height="1" fill="#ff0000"/>
<rect x="746" y="392" width="1" height="1" fill="#ff0000"/>
<rect x="741" y="393" width="1" height="1" fill="#ff0000"/>
<rect x="745" y="393" width="1" height="1" fill="#ff0000"/>
<rect x="746" y="393" width="1" height="1" fill="#ff0000"/>
<rect x="741" y="394" width="1" height="1" fill="#ff0000"/>
<rect x="742" y="394" width="1" height="1" fill="#ff0000"/>
<rect x="743" y="394" width="1" height="1" fill="#ff0000"/>
<rect x="744" y="394" width="1" height="1" fill="#ff0000"/>
<rect x="745" y="394" width="1" height="1" fill="#ff0000"/>
<rect x="743" y="384" width="1" height="1" fill="#ff0000"/>
<rect x="742" y="385" width="3" height="1" fill="#ff0000"/>
<rect x="741" y="386" width="5" height="1" fill="#ff0000"/>
<rect x="1127" y="25" width="3" height="1" fill="#b00000"/>
<rect x="1127" y="45" width="3" height="1" fill="#b00000"/>
<rect x="1127" y="142" width="3" height="1" fill="#b00000"/>
<rect x="1127" y="239" width="3" height="1" fill="#b00000"/>
<rect x="1127" y="335" width="3" height="1" fill="#b00000"/>
<rect x="1127" y="397" width="3" height="1" fill="#b00000"/>
<rect x="1127" y="418" width="3" height="1" fill="#b00000"/>
<rect x="1127" y="429" width="3" height="1" fill="#b00000"/>
<rect x="1128" y="30" width="2" height="1" fill="#c0c0c0"/>
<rect x="1128" y="32" width="2" height="1" fill="#c0c0c0"/>
<rect x="1128" y="35" width="2" height="1" fill="#c0c0c0"/>
<rect x="1128" y="59" width="2" height="1" fill="#c0c0c0"/>
<rect x="1128" y="78" width="2" height="1" fill="#c0c0c0"/>
<rect x="1128" y="97" width="2" height="1" fill="#c0c0c0"/>
<rect x="1128" y="116" width="2" height="1" fill="#c0c0c0"/>
<rect x="1128" y="135" width="2" height="1" fill="#c0c0c0"/>
<rect x="1128" y="153" width="2" height="1" fill="#c0c0c0"/>
<rect x="1128" y="158" width="2" height="1" fill="#c0c0c0"/>
<rect x="1128" y="172" width="2" height="1" fill="#c0c0c0"/>
<rect x="1128" y="178" width="2" height="1" fill="#c0c0c0"/>
<rect x="1128" y="192" width="2" height="1" fill="#c0c0c0"/>
<rect x="1128" y="198" width="2" height="1" fill="#c0c0c0"/>
<rect x="1128" y="211" width="2" height="1" fill="#c0c0c0"/>
<rect x="1128" y="217" width="2" height="1" fill="#c0c0c0"/>
<rect x="1128" y="230" width="2" height="1" fill="#c0c0c0"/>
<rect x="1128" y="236" width="2" height="1" fill="#c0c0c0"/>
<rect x="1128" y="244" width="2" height="1" fill="#c0c0c0"/>
<rect x="1128" y="250" width="2" height="1" fill="#c0c0c0"/>
<rect x="1128" y="257" width="2" height="1" fill="#c0c0c0"/>
<rect x="1128" y="263" width="2" height="1" fill="#c0c0c0"/>
<rect x="1128" y="278" width="2" height="1" fill="#c0c0c0"/>
<rect x="1128" y="284" width="2" height="1" fill="#c0c0c0"/>
<rect x="1128" y="306" width="2" height="1" fill="#c0c0c0"/>
<rect x="1128" y="325" width="2" height="1" fill="#c0c0c0"/>
<rect x="1128" y="332" width="2" height="1" fill="#c0c0c0"/>
<rect x="1128" y="342" width="2" height="1" fill="#c0c0c0"/>
<rect x="1128" y="348" width="2" height="1" fill="#c0c0c0"/>
<rect x="1128" y="362" width="2" height="1" fill="#c0c0c0"/>
<rect x="1128" y="414" width="2" height="1" fill="#c0c0c0"/>
<rect x="1128" y="422" width="2" height="1" fill="#c0c0c0"/>
<rect x="1128" y="436" width="2" height="1" fill="#c0c0c0"/>
<rect x="1128" y="454" width="2" height="1" fill="#c0c0c0"/>
<rect x="1128" y="472" width="2" height="1" fill="#c0c0c0"/>
<rect x="1128" y="497" width="2" height="1" fill="#c0c0c0"/>
<rect x="1128" y="516" width="2" height="1" fill="#c0c0c0"/>
<rect x="1128" y="533" width="2" height="1" fill="#c0c0c0"/>
<rect x="1128" y="551" width="2" height="1" fill="#c0c0c0"/>
<rect x="1128" y="569" width="2" height="1" fill="#c0c0c0"/>
<rect x="1128" y="587" width="2" height="1" fill="#c0c0c0"/>
<rect x="0" y="647" width="1" height="3" fill="#b00000"/>
<rect x="42" y="647" width="1" height="3" fill="#b00000"/>
<rect x="73" y="647" width="1" height="3" fill="#b00000"/>
<rect x="115" y="647" width="1" height="3" fill="#b00000"/>
<rect x="144" y="647" width="1" height="3" fill="#b00000"/>
<rect x="177" y="647" width="1" height="3" fill="#b00000"/>
<rect x="207" y="647" width="1" height="3" fill="#b00000"/>
<rect x="241" y="647" width="1" height="3" fill="#b00000"/>
<rect x="282" y="647" width="1" height="3" fill="#b00000"/>
<rect x="308" y="647" width="1" height="3" fill="#b00000"/>
<rect x="332" y="647" width="1" height="3" fill="#b00000"/>
<rect x="364" y="647" width="1" height="3" fill="#b00000"/>
<rect x="391" y="647" width="1" height="3" fill="#b00000"/>
<rect x="422" y="647" width="1" height="3" fill="#b00000"/>
<rect x="453" y="647" width="1" height="3" fill="#b00000"/>
<rect x="480" y="647" width="1" height="3" fill="#b00000"/>
<rect x="508" y="647" width="1" height="3" fill="#b00000"/>
<rect x="537" y="647" width="1" height="3" fill="#b00000"/>
<rect x="568" y="647" width="1" height="3" fill="#b00000"/>
<rect x="599" y="647" width="1" height="3" fill="#b00000"/>
<rect x="628" y="647" width="1" height="3" fill="#b00000"/>
<rect x="662" y="647" width="1" height="3" fill="#b00000"/>
<rect x="696" y="647" width="1" height="3" fill="#b00000"/>
<rect x="735" y="647" width="1" height="3" fill="#b00000"/>
<rect x="766" y="647" width="1" height="3" fill="#b00000"/>
<rect x="807" y="647" width="1" height="3" fill="#b00000"/>
<rect x="840" y="647" width="1" height="3" fill="#b00000"/>
<rect x="871" y="647" width="1" height="3" fill="#b00000"/>
<rect x="8" y="649" width="1" height="1" fill="#ffffff"/>
<rect x="11" y="649" width="1" height="1" fill="#ffffff"/>
<rect x="12" y="649" width="1" height="1" fill="#ffffff"/>
<rect x="16" y="649" width="1" height="1" fill="#ffffff"/>
<rect x="20" y="649" width="1" height="1" fill="#ffffff"/>
<rect x="51" y="649" width="1" height="1" fill="#ffffff"/>
<rect x="828" y="649" width="1" height="1" fill="#ffffff"/>
<rect x="845" y="648" width="2" height="2" fill="#54ffff"/>
<rect x="849" y="648" width="2" height="2" fill="#54ffff"/>
<rect x="856" y="648" width="9" height="1" fill="#54ffff"/>
</g>
<g>
</g>
<g>
<text x="28" y="13.4" font-size="12" fill="#c0c0c0">分时</text>
<text x="60.6" y="13" font-size="12" fill="#c0c0c0">1</text>
<text x="67.27" y="13.4" font-size="12" fill="#c0c0c0">分钟</text>
<text x="100.7" y="13" font-size="12" fill="#c0c0c0">5</text>
<text x="107.37" y="13.4" font-size="12" fill="#c0c0c0">分钟</text>
<text x="139.3" y="13" font-size="12" fill="#c0c0c0">15</text>
<text x="152.64" y="13.4" font-size="12" fill="#c0c0c0">分钟</text>
<text x="185.8" y="13" font-size="12" fill="#c0c0c0">30</text>
<text x="199.14" y="13.4" font-size="12" fill="#c0c0c0">分钟</text>
<text x="231.6" y="13" font-size="12" fill="#c0c0c0">60</text>
<text x="244.94" y="13.4" font-size="12" fill="#c0c0c0">分钟</text>
<text x="278" y="13.4" font-size="12" fill="#54ffff">日线</text>
<text x="311" y="13.4" font-size="12" fill="#c0c0c0">周线</text>
<text x="345" y="13.4" font-size="12" fill="#c0c0c0">月线</text>
<text x="379" y="13.4" font-size="12" fill="#c0c0c0">多周期</text>
<text x="423" y="13.4" font-size="12" fill="#c0c0c0">更多</text>
<text x="449.8" y="13" font-size="12" fill="#c0c0c0">&gt;</text>
<text x="816" y="13.4" font-size="12" fill="#c0c0c0">复权</text>
<text x="850" y="13.4" font-size="12" fill="#c0c0c0">叠加</text>
<text x="884.6" y="13.4" font-size="12" fill="#c0c0c0">多股</text>
<text x="919.6" y="13.4" font-size="12" fill="#c0c0c0">统计</text>
<text x="955" y="13.4" font-size="12" fill="#c0c0c0">画线</text>
<text x="992.4" y="13" font-size="12" fill="#c0c0c0">F10</text>
<text x="1025" y="13.4" font-size="12" fill="#c0c0c0">标记</text>
<text x="1057.8" y="13" font-size="12" fill="#c0c0c0">+</text>
<text x="1064.8" y="13.4" font-size="12" fill="#c0c0c0">自选</text>
<text x="1096" y="13.4" font-size="12" fill="#c0c0c0">返回</text>
<text x="3" y="33.4" font-size="12" fill="#c0c0c0">中天火箭</text>
<text x="51" y="33" font-size="12" fill="#c0c0c0">(</text>
<text x="55" y="33.4" font-size="12" fill="#c0c0c0">日线</text>
<text x="79" y="33" font-size="12" fill="#c0c0c0">.</text>
<text x="82.33" y="33.4" font-size="12" fill="#c0c0c0">前复权</text>
<text x="118.33" y="33" font-size="12" fill="#c0c0c0">)</text>
<text x="18" y="409.4" font-size="12" fill="#c0c0c0">股朋指标网</text>
<text x="1090.3" y="80" font-size="12" fill="#ff3232">65.00</text>
<text x="1090.3" y="128" font-size="12" fill="#ff3232">60.00</text>
<text x="1090.3" y="175" font-size="12" fill="#ff3232">55.00</text>
<text x="1090.3" y="222" font-size="12" fill="#ff3232">50.00</text>
<text x="1090.3" y="270" font-size="12" fill="#ff3232">45.00</text>
<text x="1090.3" y="317" font-size="12" fill="#ff3232">40.00</text>
<text x="1090.3" y="365" font-size="12" fill="#ff3232">35.00</text>
<text x="1090.3" y="443" font-size="12" fill="#ff3232">100.0</text>
<text x="1090.3" y="477" font-size="12" fill="#ff3232">80.00</text>
<text x="1090.3" y="510" font-size="12" fill="#ff3232">60.00</text>
<text x="1090.3" y="544" font-size="12" fill="#ff3232">40.00</text>
<text x="1090.3" y="577" font-size="12" fill="#ff3232">20.00</text>
<text x="957.3" y="50" font-size="12" fill="#c0c0c0">68.73</text>
<text x="518.5" y="383" font-size="12" fill="#c0c0c0">33.14</text>
<text x="83" y="409" font-size="12" fill="#ffffff">K: 8.36</text>
<text x="126" y="409" font-size="12" fill="#ffff00">D: 9.09</text>
<text x="169" y="409" font-size="12" fill="#ff00ff">J: 6.92</text>
<text x="211" y="409" font-size="12" fill="#00ff00">: 92.21</text>
<text x="253" y="409" font-size="12" fill="#c0c0c0">: 19.52</text>
<text x="122.5" y="643" font-size="12" fill="#ff3232">12</text>
<text x="223.5" y="643" font-size="12" fill="#ff3232">1</text>
<text x="306.5" y="643" font-size="12" fill="#ff3232">2</text>
<text x="389.5" y="643" font-size="12" fill="#ff3232">3</text>
<text x="486.5" y="643" font-size="12" fill="#ff3232">4</text>
<text x="583.5" y="643" font-size="12" fill="#ff3232">5</text>
<text x="671.5" y="643" font-size="12" fill="#ff3232">6</text>
<text x="763.5" y="643" font-size="12" fill="#ff3232">7</text>
<text x="966.5" y="643" font-size="12" fill="#ff3232">9</text>
<text x="2.5" y="643" font-size="12" fill="#ff3232">2024</text>
<text x="29.2" y="643.4" font-size="12" fill="#ff3232">年</text>
</g>
<g>
<path d="M250 382h11l2 2v11h-13z" fill="#008000" shape-rendering="crispEdges"/>
<text x="250.5" y="392.6" font-size="12" fill="#ffffff">减</text>
<path d="M922 382h11l2 2v11h-13z" fill="#800000" shape-rendering="crispEdges"/>
<text x="922.5" y="392.6" font-size="12" fill="#ffffff">涨</text>
<path d="M931 382h11l2 2v11h-13z" fill="#004080" shape-rendering="crispEdges"/>
<text x="931.5" y="392.6" font-size="12" fill="#ffffff">预</text>
<path d="M936 382h11l2 2v11h-13z" fill="#a05000" shape-rendering="crispEdges"/>
<text x="936.5" y="392.6" font-size="12" fill="#ffffff">榜</text>
<path d="M968 382h11l2 2v11h-13z" fill="#008000" shape-rendering="crispEdges"/>
<text x="968.5" y="392.6" font-size="12" fill="#ffffff">跌</text>
<rect x="978" y="600" width="152" height="50" fill="#000"/>
<text x="999" y="627" font-size="20.6" font-weight="bold" fill="#ffffff" style="font-family:&quot;Liberation Serif&quot;,&quot;Noto Serif CJK SC&quot;,serif">乐淘公式网</text>
<text x="1046" y="643.6" text-anchor="middle" style="font-family:&quot;Liberation Serif&quot;,serif" font-weight="bold" font-size="14.7" fill="#ffffff">www.60lt.com</text>
<text x="814" y="642" font-size="12" fill="#f0f0e0">2025/07/16/</text>
<text x="877.4" y="642" font-size="12" fill="#f0f0e0">三</text>
<rect x="5.5" y="3.5" width="11" height="10" rx="2.5" fill="none" stroke="#808080" stroke-width="1.2"/>
<rect x="12" y="5" width="3" height="7" fill="#909090" shape-rendering="crispEdges"/>
<rect x="1060.5" y="24.5" width="11" height="10" rx="2.5" fill="none" stroke="#808080" stroke-width="1.2"/>
<rect x="1067" y="26" width="3" height="7" fill="#909090" shape-rendering="crispEdges"/>
<path d="M1047.5 24.3l5.2 5.2l-5.2 5.2l-5.2-5.2z" fill="none" stroke="#808080" stroke-width="1"/>
<circle cx="134" cy="29" r="6" fill="#808080"/>
<path d="M131 27.8l3 2.8l3-2.8" fill="none" stroke="#181818" stroke-width="1.1"/>
<circle cx="8" cy="405" r="6" fill="#808080"/>
<path d="M5 403.8l3 2.8l3-2.8" fill="none" stroke="#181818" stroke-width="1.1"/>
<path d="M955 45L943.5 41.5M943.5 40.3L947.5 39.5M943.5 41.5L946 45" fill="none" stroke="#c0c0c0" stroke-width="1"/>
<path d="M505 377.5H517M505.5 377.5L509 375.5M505.5 377.5L509 381" fill="none" stroke="#c0c0c0" stroke-width="1"/>
</g>
</svg>
</body></html>
